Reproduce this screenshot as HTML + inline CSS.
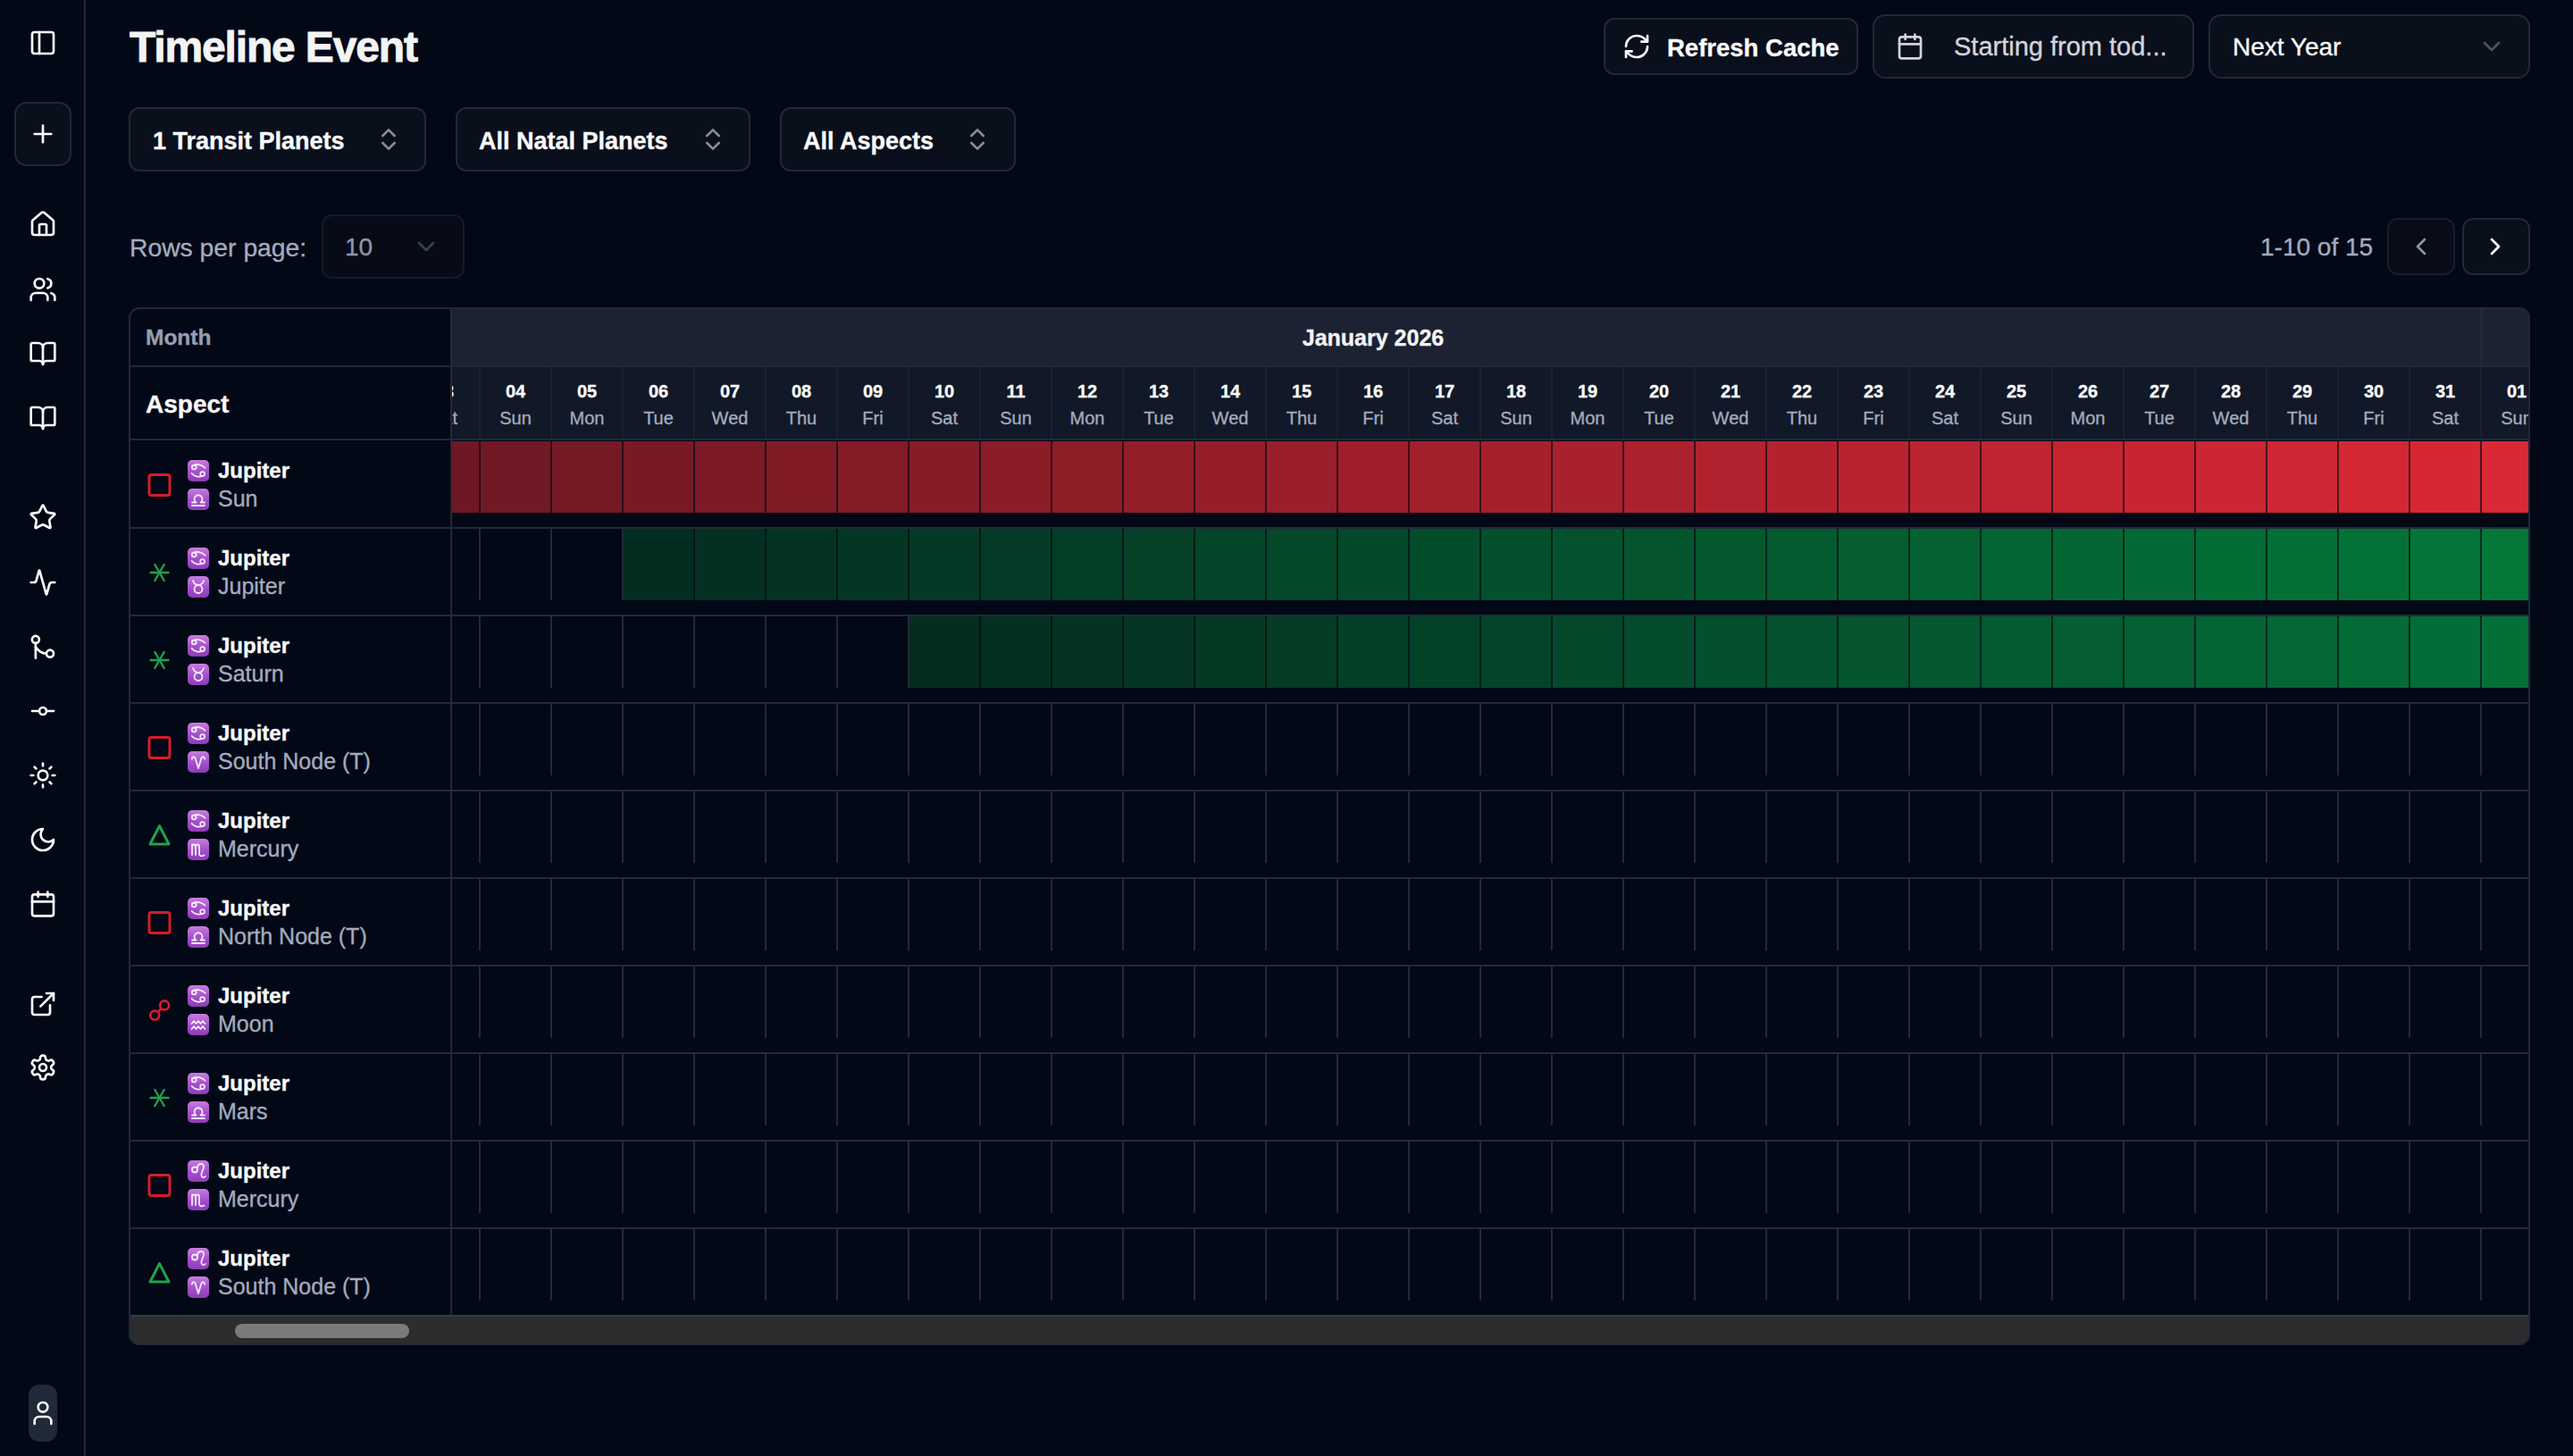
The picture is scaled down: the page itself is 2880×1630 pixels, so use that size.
<!DOCTYPE html>
<html><head><meta charset="utf-8"><title>Timeline Event</title>
<style>
html,body{margin:0;padding:0;}
body{width:2880px;height:1630px;overflow:hidden;background:#020816;font-family:"Liberation Sans",sans-serif;position:relative;}
svg{display:block;overflow:visible}
div{-webkit-text-stroke:0.35px}
@media (max-width:2000px){html{zoom:0.5}}
</style></head><body>
<div style="position:absolute;left:94px;top:0px;width:2px;height:1630px;box-sizing:border-box;background:#1f2937"></div><svg style="position:absolute;left:32px;top:32px" width="32" height="32" viewBox="0 0 24 24" fill="none" stroke="#f9fafb" stroke-width="2" stroke-linecap="round" stroke-linejoin="round" ><rect width="18" height="18" x="3" y="3" rx="2"/><path d="M9 3v18"/></svg><div style="position:absolute;left:16px;top:114px;width:64px;height:72px;box-sizing:border-box;border:2px solid #1f2937;border-radius:14px;background:#0a0f1c"></div><svg style="position:absolute;left:32px;top:134px" width="32" height="32" viewBox="0 0 24 24" fill="none" stroke="#f9fafb" stroke-width="2" stroke-linecap="round" stroke-linejoin="round" ><path d="M5 12h14"/><path d="M12 5v14"/></svg><svg style="position:absolute;left:32px;top:235px" width="32" height="32" viewBox="0 0 24 24" fill="none" stroke="#f9fafb" stroke-width="2" stroke-linecap="round" stroke-linejoin="round" ><path d="M15 21v-8a1 1 0 0 0-1-1h-4a1 1 0 0 0-1 1v8"/><path d="M3 10a2 2 0 0 1 .709-1.528l7-5.999a2 2 0 0 1 2.582 0l7 5.999A2 2 0 0 1 21 10v9a2 2 0 0 1-2 2H5a2 2 0 0 1-2-2z"/></svg><svg style="position:absolute;left:32px;top:308px" width="32" height="32" viewBox="0 0 24 24" fill="none" stroke="#f9fafb" stroke-width="2" stroke-linecap="round" stroke-linejoin="round" ><path d="M16 21v-2a4 4 0 0 0-4-4H6a4 4 0 0 0-4 4v2"/><circle cx="9" cy="7" r="4"/><path d="M22 21v-2a4 4 0 0 0-3-3.87"/><path d="M16 3.13a4 4 0 0 1 0 7.75"/></svg><svg style="position:absolute;left:32px;top:380px" width="32" height="32" viewBox="0 0 24 24" fill="none" stroke="#f9fafb" stroke-width="2" stroke-linecap="round" stroke-linejoin="round" ><path d="M12 7v14"/><path d="M3 18a1 1 0 0 1-1-1V4a1 1 0 0 1 1-1h5a4 4 0 0 1 4 4 4 4 0 0 1 4-4h5a1 1 0 0 1 1 1v13a1 1 0 0 1-1 1h-6a3 3 0 0 0-3 3 3 3 0 0 0-3-3z"/></svg><svg style="position:absolute;left:32px;top:452px" width="32" height="32" viewBox="0 0 24 24" fill="none" stroke="#f9fafb" stroke-width="2" stroke-linecap="round" stroke-linejoin="round" ><path d="M12 7v14"/><path d="M3 18a1 1 0 0 1-1-1V4a1 1 0 0 1 1-1h5a4 4 0 0 1 4 4 4 4 0 0 1 4-4h5a1 1 0 0 1 1 1v13a1 1 0 0 1-1 1h-6a3 3 0 0 0-3 3 3 3 0 0 0-3-3z"/></svg><svg style="position:absolute;left:32px;top:563px" width="32" height="32" viewBox="0 0 24 24" fill="none" stroke="#f9fafb" stroke-width="2" stroke-linecap="round" stroke-linejoin="round" ><path d="M11.525 2.295a.53.53 0 0 1 .95 0l2.31 4.679a2.123 2.123 0 0 0 1.595 1.16l5.166.756a.53.53 0 0 1 .294.904l-3.736 3.638a2.123 2.123 0 0 0-.611 1.878l.882 5.14a.53.53 0 0 1-.771.56l-4.618-2.428a2.122 2.122 0 0 0-1.973 0L6.396 21.01a.53.53 0 0 1-.77-.56l.881-5.139a2.122 2.122 0 0 0-.611-1.879L2.16 9.795a.53.53 0 0 1 .294-.906l5.165-.755a2.122 2.122 0 0 0 1.597-1.16z"/></svg><svg style="position:absolute;left:32px;top:636px" width="32" height="32" viewBox="0 0 24 24" fill="none" stroke="#f9fafb" stroke-width="2" stroke-linecap="round" stroke-linejoin="round" ><path d="M22 12h-2.48a2 2 0 0 0-1.93 1.46l-2.35 8.36a.25.25 0 0 1-.48 0L9.24 2.18a.25.25 0 0 0-.48 0l-2.35 8.36A2 2 0 0 1 4.49 12H2"/></svg><svg style="position:absolute;left:32px;top:709px" width="32" height="32" viewBox="0 0 24 24" fill="none" stroke="#f9fafb" stroke-width="2" stroke-linecap="round" stroke-linejoin="round" ><circle cx="5.9" cy="5.2" r="3"/><path d="M5.9 8.2v12.6"/><path d="M5.9 11.5c2 3 5 5.5 9 5.5"/><circle cx="18" cy="17" r="3"/></svg><svg style="position:absolute;left:32px;top:780px" width="32" height="32" viewBox="0 0 24 24" fill="none" stroke="#f9fafb" stroke-width="2" stroke-linecap="round" stroke-linejoin="round" ><circle cx="12" cy="12" r="3"/><line x1="3" x2="9" y1="12" y2="12"/><line x1="15" x2="21" y1="12" y2="12"/></svg><svg style="position:absolute;left:32px;top:852px" width="32" height="32" viewBox="0 0 24 24" fill="none" stroke="#f9fafb" stroke-width="2" stroke-linecap="round" stroke-linejoin="round" ><circle cx="12" cy="12" r="4"/><path d="M12 2v2"/><path d="M12 20v2"/><path d="m4.93 4.93 1.41 1.41"/><path d="m17.66 17.66 1.41 1.41"/><path d="M2 12h2"/><path d="M20 12h2"/><path d="m6.34 17.66-1.41 1.41"/><path d="m19.07 4.93-1.41 1.41"/></svg><svg style="position:absolute;left:32px;top:924px" width="32" height="32" viewBox="0 0 24 24" fill="none" stroke="#f9fafb" stroke-width="2" stroke-linecap="round" stroke-linejoin="round" ><path d="M12 3a6 6 0 0 0 9 9 9 9 0 1 1-9-9Z"/></svg><svg style="position:absolute;left:32px;top:996px" width="32" height="32" viewBox="0 0 24 24" fill="none" stroke="#f9fafb" stroke-width="2" stroke-linecap="round" stroke-linejoin="round" ><path d="M8 2v4"/><path d="M16 2v4"/><rect width="18" height="18" x="3" y="4" rx="2"/><path d="M3 10h18"/></svg><svg style="position:absolute;left:32px;top:1108px" width="32" height="32" viewBox="0 0 24 24" fill="none" stroke="#f9fafb" stroke-width="2" stroke-linecap="round" stroke-linejoin="round" ><path d="M15 3h6v6"/><path d="M10 14 21 3"/><path d="M18 13v6a2 2 0 0 1-2 2H5a2 2 0 0 1-2-2V8a2 2 0 0 1 2-2h6"/></svg><svg style="position:absolute;left:32px;top:1179px" width="32" height="32" viewBox="0 0 24 24" fill="none" stroke="#f9fafb" stroke-width="2" stroke-linecap="round" stroke-linejoin="round" ><path d="M12.22 2h-.44a2 2 0 0 0-2 2v.18a2 2 0 0 1-1 1.73l-.43.25a2 2 0 0 1-2 0l-.15-.08a2 2 0 0 0-2.73.73l-.22.38a2 2 0 0 0 .73 2.73l.15.1a2 2 0 0 1 1 1.72v.51a2 2 0 0 1-1 1.74l-.15.09a2 2 0 0 0-.73 2.73l.22.38a2 2 0 0 0 2.73.73l.15-.08a2 2 0 0 1 2 0l.43.25a2 2 0 0 1 1 1.73V20a2 2 0 0 0 2 2h.44a2 2 0 0 0 2-2v-.18a2 2 0 0 1 1-1.73l.43-.25a2 2 0 0 1 2 0l.15.08a2 2 0 0 0 2.73-.73l.22-.39a2 2 0 0 0-.73-2.73l-.15-.08a2 2 0 0 1-1-1.74v-.5a2 2 0 0 1 1-1.74l.15-.09a2 2 0 0 0 .73-2.73l-.22-.38a2 2 0 0 0-2.73-.73l-.15.08a2 2 0 0 1-2 0l-.43-.25a2 2 0 0 1-1-1.73V4a2 2 0 0 0-2-2z"/><circle cx="12" cy="12" r="3"/></svg><div style="position:absolute;left:32px;top:1550px;width:32px;height:64px;box-sizing:border-box;background:#1f2937;border-radius:12px"></div><svg style="position:absolute;left:32px;top:1566px" width="32" height="32" viewBox="0 0 24 24" fill="none" stroke="#f9fafb" stroke-width="2" stroke-linecap="round" stroke-linejoin="round" ><path d="M19 21v-2a4 4 0 0 0-4-4H9a4 4 0 0 0-4 4v2"/><circle cx="12" cy="7" r="4"/></svg><div style="position:absolute;left:145px;top:29.37px;font-size:48px;line-height:48px;color:#f3f4f6;font-weight:700;white-space:nowrap;letter-spacing:-1.15px;-webkit-text-stroke:0.9px #f3f4f6">Timeline Event</div><div style="position:absolute;left:1795px;top:20px;width:285px;height:64px;box-sizing:border-box;border:2px solid #1f2937;border-radius:12px;background:#0a0f1c"></div><svg style="position:absolute;left:1816px;top:36px" width="32" height="32" viewBox="0 0 24 24" fill="none" stroke="#f9fafb" stroke-width="2" stroke-linecap="round" stroke-linejoin="round" ><path d="M3 12a9 9 0 0 1 9-9 9.75 9.75 0 0 1 6.74 2.74L21 8"/><path d="M21 3v5h-5"/><path d="M21 12a9 9 0 0 1-9 9 9.75 9.75 0 0 1-6.74-2.74L3 16"/><path d="M8 16H3v5"/></svg><div style="position:absolute;left:1866px;top:39.72px;font-size:27.5px;line-height:27.5px;color:#f9fafb;font-weight:700;white-space:nowrap;">Refresh Cache</div><div style="position:absolute;left:2096px;top:16px;width:360px;height:72px;box-sizing:border-box;border:2px solid #1f2937;border-radius:14px;background:#0a0f1c"></div><svg style="position:absolute;left:2122px;top:36px" width="32" height="32" viewBox="0 0 24 24" fill="none" stroke="#d1d5db" stroke-width="2" stroke-linecap="round" stroke-linejoin="round" ><path d="M8 2v4"/><path d="M16 2v4"/><rect width="18" height="18" x="3" y="4" rx="2"/><path d="M3 10h18"/></svg><div style="position:absolute;left:2187px;top:38.45px;font-size:29px;line-height:29px;color:#d1d5db;font-weight:400;white-space:nowrap;">Starting from tod...</div><div style="position:absolute;left:2472px;top:16px;width:360px;height:72px;box-sizing:border-box;border:2px solid #1f2937;border-radius:14px;background:#0a0f1c"></div><div style="position:absolute;left:2499px;top:39.30px;font-size:28px;line-height:28px;color:#f9fafb;font-weight:400;white-space:nowrap;">Next Year</div><svg style="position:absolute;left:2773px;top:36px" width="32" height="32" viewBox="0 0 24 24" fill="none" stroke="#9ca3af" stroke-width="2" stroke-linecap="round" stroke-linejoin="round" opacity="0.45"><path d="m6 9 6 6 6-6"/></svg><div style="position:absolute;left:144px;top:120px;width:333px;height:72px;box-sizing:border-box;border:2px solid #1f2937;border-radius:12px;background:#0a0f1c"></div><div style="position:absolute;left:171px;top:145.14px;font-size:27px;line-height:27px;color:#f9fafb;font-weight:700;white-space:nowrap;">1 Transit Planets</div><svg style="position:absolute;left:419px;top:140px" width="32" height="32" viewBox="0 0 24 24" fill="none" stroke="#9ca3af" stroke-width="2" stroke-linecap="round" stroke-linejoin="round" opacity="0.85"><path d="m7 15 5 5 5-5"/><path d="m7 9 5-5 5 5"/></svg><div style="position:absolute;left:510px;top:120px;width:330px;height:72px;box-sizing:border-box;border:2px solid #1f2937;border-radius:12px;background:#0a0f1c"></div><div style="position:absolute;left:536px;top:145.14px;font-size:27px;line-height:27px;color:#f9fafb;font-weight:700;white-space:nowrap;">All Natal Planets</div><svg style="position:absolute;left:782px;top:140px" width="32" height="32" viewBox="0 0 24 24" fill="none" stroke="#9ca3af" stroke-width="2" stroke-linecap="round" stroke-linejoin="round" opacity="0.85"><path d="m7 15 5 5 5-5"/><path d="m7 9 5-5 5 5"/></svg><div style="position:absolute;left:873px;top:120px;width:264px;height:72px;box-sizing:border-box;border:2px solid #1f2937;border-radius:12px;background:#0a0f1c"></div><div style="position:absolute;left:899px;top:145.14px;font-size:27px;line-height:27px;color:#f9fafb;font-weight:700;white-space:nowrap;">All Aspects</div><svg style="position:absolute;left:1078px;top:140px" width="32" height="32" viewBox="0 0 24 24" fill="none" stroke="#9ca3af" stroke-width="2" stroke-linecap="round" stroke-linejoin="round" opacity="0.85"><path d="m7 15 5 5 5-5"/><path d="m7 9 5-5 5 5"/></svg><div style="position:absolute;left:145px;top:263.04px;font-size:28.3px;line-height:28.3px;color:#a3abbd;font-weight:400;white-space:nowrap;">Rows per page:</div><div style="position:absolute;left:360px;top:240px;width:160px;height:72px;box-sizing:border-box;border:2px solid #141a27;border-radius:12px;background:#060b17"></div><div style="position:absolute;left:386px;top:263.30px;font-size:28px;line-height:28px;color:#9097a4;font-weight:400;white-space:nowrap;">10</div><svg style="position:absolute;left:461px;top:260px" width="32" height="32" viewBox="0 0 24 24" fill="none" stroke="#9ca3af" stroke-width="2" stroke-linecap="round" stroke-linejoin="round" opacity="0.35"><path d="m6 9 6 6 6-6"/></svg><div style="position:absolute;left:2530px;top:263.30px;font-size:28px;line-height:28px;color:#a3abbd;font-weight:400;white-space:nowrap;">1-10 of 15</div><div style="position:absolute;left:2672px;top:244px;width:76px;height:64px;box-sizing:border-box;border:2px solid #171d2a;border-radius:12px;background:#070c18"></div><svg style="position:absolute;left:2694px;top:260px" width="32" height="32" viewBox="0 0 24 24" fill="none" stroke="#8d94a2" stroke-width="2" stroke-linecap="round" stroke-linejoin="round" ><path d="m15 18-6-6 6-6"/></svg><div style="position:absolute;left:2756px;top:244px;width:76px;height:64px;box-sizing:border-box;border:2px solid #1f2937;border-radius:12px;background:#0a0f1c"></div><svg style="position:absolute;left:2777px;top:260px" width="32" height="32" viewBox="0 0 24 24" fill="none" stroke="#f9fafb" stroke-width="2" stroke-linecap="round" stroke-linejoin="round" ><path d="m9 18 6-6-6-6"/></svg><div style="position:absolute;left:145px;top:344px;width:2686px;height:1162px;overflow:hidden;border-radius:12px"><div style="position:absolute;left:360px;top:0px;width:2326px;height:67px;box-sizing:border-box;background:#1c2232"></div><div style="position:absolute;left:360px;top:65px;width:2326px;height:2px;box-sizing:border-box;background:#1f2937"></div><div style="position:absolute;left:2631px;top:0px;width:2px;height:65px;box-sizing:border-box;background:#222a39"></div><div style="position:absolute;left:1092px;width:600px;text-align:center;top:21.84px;font-size:25px;line-height:25px;color:#f3f4f6;font-weight:700;white-space:nowrap;">January 2026</div><div style="position:absolute;left:360px;top:67px;width:2326px;height:82px;box-sizing:border-box;background:#111827"></div><div style="position:absolute;left:0px;top:147px;width:2686px;height:2px;box-sizing:border-box;background:#1f2937"></div><div style="position:absolute;left:391px;top:67px;width:2px;height:80px;box-sizing:border-box;background:#1a2130"></div><div style="position:absolute;left:52px;width:600px;text-align:center;top:83.57px;font-size:20px;line-height:20px;color:#f9fafb;font-weight:700;white-space:nowrap;">03</div><div style="position:absolute;left:52px;width:600px;text-align:center;top:113.67px;font-size:20px;line-height:20px;color:#a3abbd;font-weight:400;white-space:nowrap;">Sat</div><div style="position:absolute;left:471px;top:67px;width:2px;height:80px;box-sizing:border-box;background:#1a2130"></div><div style="position:absolute;left:132px;width:600px;text-align:center;top:83.57px;font-size:20px;line-height:20px;color:#f9fafb;font-weight:700;white-space:nowrap;">04</div><div style="position:absolute;left:132px;width:600px;text-align:center;top:113.67px;font-size:20px;line-height:20px;color:#a3abbd;font-weight:400;white-space:nowrap;">Sun</div><div style="position:absolute;left:551px;top:67px;width:2px;height:80px;box-sizing:border-box;background:#1a2130"></div><div style="position:absolute;left:212px;width:600px;text-align:center;top:83.57px;font-size:20px;line-height:20px;color:#f9fafb;font-weight:700;white-space:nowrap;">05</div><div style="position:absolute;left:212px;width:600px;text-align:center;top:113.67px;font-size:20px;line-height:20px;color:#a3abbd;font-weight:400;white-space:nowrap;">Mon</div><div style="position:absolute;left:631px;top:67px;width:2px;height:80px;box-sizing:border-box;background:#1a2130"></div><div style="position:absolute;left:292px;width:600px;text-align:center;top:83.57px;font-size:20px;line-height:20px;color:#f9fafb;font-weight:700;white-space:nowrap;">06</div><div style="position:absolute;left:292px;width:600px;text-align:center;top:113.67px;font-size:20px;line-height:20px;color:#a3abbd;font-weight:400;white-space:nowrap;">Tue</div><div style="position:absolute;left:711px;top:67px;width:2px;height:80px;box-sizing:border-box;background:#1a2130"></div><div style="position:absolute;left:372px;width:600px;text-align:center;top:83.57px;font-size:20px;line-height:20px;color:#f9fafb;font-weight:700;white-space:nowrap;">07</div><div style="position:absolute;left:372px;width:600px;text-align:center;top:113.67px;font-size:20px;line-height:20px;color:#a3abbd;font-weight:400;white-space:nowrap;">Wed</div><div style="position:absolute;left:791px;top:67px;width:2px;height:80px;box-sizing:border-box;background:#1a2130"></div><div style="position:absolute;left:452px;width:600px;text-align:center;top:83.57px;font-size:20px;line-height:20px;color:#f9fafb;font-weight:700;white-space:nowrap;">08</div><div style="position:absolute;left:452px;width:600px;text-align:center;top:113.67px;font-size:20px;line-height:20px;color:#a3abbd;font-weight:400;white-space:nowrap;">Thu</div><div style="position:absolute;left:871px;top:67px;width:2px;height:80px;box-sizing:border-box;background:#1a2130"></div><div style="position:absolute;left:532px;width:600px;text-align:center;top:83.57px;font-size:20px;line-height:20px;color:#f9fafb;font-weight:700;white-space:nowrap;">09</div><div style="position:absolute;left:532px;width:600px;text-align:center;top:113.67px;font-size:20px;line-height:20px;color:#a3abbd;font-weight:400;white-space:nowrap;">Fri</div><div style="position:absolute;left:951px;top:67px;width:2px;height:80px;box-sizing:border-box;background:#1a2130"></div><div style="position:absolute;left:612px;width:600px;text-align:center;top:83.57px;font-size:20px;line-height:20px;color:#f9fafb;font-weight:700;white-space:nowrap;">10</div><div style="position:absolute;left:612px;width:600px;text-align:center;top:113.67px;font-size:20px;line-height:20px;color:#a3abbd;font-weight:400;white-space:nowrap;">Sat</div><div style="position:absolute;left:1031px;top:67px;width:2px;height:80px;box-sizing:border-box;background:#1a2130"></div><div style="position:absolute;left:692px;width:600px;text-align:center;top:83.57px;font-size:20px;line-height:20px;color:#f9fafb;font-weight:700;white-space:nowrap;">11</div><div style="position:absolute;left:692px;width:600px;text-align:center;top:113.67px;font-size:20px;line-height:20px;color:#a3abbd;font-weight:400;white-space:nowrap;">Sun</div><div style="position:absolute;left:1111px;top:67px;width:2px;height:80px;box-sizing:border-box;background:#1a2130"></div><div style="position:absolute;left:772px;width:600px;text-align:center;top:83.57px;font-size:20px;line-height:20px;color:#f9fafb;font-weight:700;white-space:nowrap;">12</div><div style="position:absolute;left:772px;width:600px;text-align:center;top:113.67px;font-size:20px;line-height:20px;color:#a3abbd;font-weight:400;white-space:nowrap;">Mon</div><div style="position:absolute;left:1191px;top:67px;width:2px;height:80px;box-sizing:border-box;background:#1a2130"></div><div style="position:absolute;left:852px;width:600px;text-align:center;top:83.57px;font-size:20px;line-height:20px;color:#f9fafb;font-weight:700;white-space:nowrap;">13</div><div style="position:absolute;left:852px;width:600px;text-align:center;top:113.67px;font-size:20px;line-height:20px;color:#a3abbd;font-weight:400;white-space:nowrap;">Tue</div><div style="position:absolute;left:1271px;top:67px;width:2px;height:80px;box-sizing:border-box;background:#1a2130"></div><div style="position:absolute;left:932px;width:600px;text-align:center;top:83.57px;font-size:20px;line-height:20px;color:#f9fafb;font-weight:700;white-space:nowrap;">14</div><div style="position:absolute;left:932px;width:600px;text-align:center;top:113.67px;font-size:20px;line-height:20px;color:#a3abbd;font-weight:400;white-space:nowrap;">Wed</div><div style="position:absolute;left:1351px;top:67px;width:2px;height:80px;box-sizing:border-box;background:#1a2130"></div><div style="position:absolute;left:1012px;width:600px;text-align:center;top:83.57px;font-size:20px;line-height:20px;color:#f9fafb;font-weight:700;white-space:nowrap;">15</div><div style="position:absolute;left:1012px;width:600px;text-align:center;top:113.67px;font-size:20px;line-height:20px;color:#a3abbd;font-weight:400;white-space:nowrap;">Thu</div><div style="position:absolute;left:1431px;top:67px;width:2px;height:80px;box-sizing:border-box;background:#1a2130"></div><div style="position:absolute;left:1092px;width:600px;text-align:center;top:83.57px;font-size:20px;line-height:20px;color:#f9fafb;font-weight:700;white-space:nowrap;">16</div><div style="position:absolute;left:1092px;width:600px;text-align:center;top:113.67px;font-size:20px;line-height:20px;color:#a3abbd;font-weight:400;white-space:nowrap;">Fri</div><div style="position:absolute;left:1511px;top:67px;width:2px;height:80px;box-sizing:border-box;background:#1a2130"></div><div style="position:absolute;left:1172px;width:600px;text-align:center;top:83.57px;font-size:20px;line-height:20px;color:#f9fafb;font-weight:700;white-space:nowrap;">17</div><div style="position:absolute;left:1172px;width:600px;text-align:center;top:113.67px;font-size:20px;line-height:20px;color:#a3abbd;font-weight:400;white-space:nowrap;">Sat</div><div style="position:absolute;left:1591px;top:67px;width:2px;height:80px;box-sizing:border-box;background:#1a2130"></div><div style="position:absolute;left:1252px;width:600px;text-align:center;top:83.57px;font-size:20px;line-height:20px;color:#f9fafb;font-weight:700;white-space:nowrap;">18</div><div style="position:absolute;left:1252px;width:600px;text-align:center;top:113.67px;font-size:20px;line-height:20px;color:#a3abbd;font-weight:400;white-space:nowrap;">Sun</div><div style="position:absolute;left:1671px;top:67px;width:2px;height:80px;box-sizing:border-box;background:#1a2130"></div><div style="position:absolute;left:1332px;width:600px;text-align:center;top:83.57px;font-size:20px;line-height:20px;color:#f9fafb;font-weight:700;white-space:nowrap;">19</div><div style="position:absolute;left:1332px;width:600px;text-align:center;top:113.67px;font-size:20px;line-height:20px;color:#a3abbd;font-weight:400;white-space:nowrap;">Mon</div><div style="position:absolute;left:1751px;top:67px;width:2px;height:80px;box-sizing:border-box;background:#1a2130"></div><div style="position:absolute;left:1412px;width:600px;text-align:center;top:83.57px;font-size:20px;line-height:20px;color:#f9fafb;font-weight:700;white-space:nowrap;">20</div><div style="position:absolute;left:1412px;width:600px;text-align:center;top:113.67px;font-size:20px;line-height:20px;color:#a3abbd;font-weight:400;white-space:nowrap;">Tue</div><div style="position:absolute;left:1831px;top:67px;width:2px;height:80px;box-sizing:border-box;background:#1a2130"></div><div style="position:absolute;left:1492px;width:600px;text-align:center;top:83.57px;font-size:20px;line-height:20px;color:#f9fafb;font-weight:700;white-space:nowrap;">21</div><div style="position:absolute;left:1492px;width:600px;text-align:center;top:113.67px;font-size:20px;line-height:20px;color:#a3abbd;font-weight:400;white-space:nowrap;">Wed</div><div style="position:absolute;left:1911px;top:67px;width:2px;height:80px;box-sizing:border-box;background:#1a2130"></div><div style="position:absolute;left:1572px;width:600px;text-align:center;top:83.57px;font-size:20px;line-height:20px;color:#f9fafb;font-weight:700;white-space:nowrap;">22</div><div style="position:absolute;left:1572px;width:600px;text-align:center;top:113.67px;font-size:20px;line-height:20px;color:#a3abbd;font-weight:400;white-space:nowrap;">Thu</div><div style="position:absolute;left:1991px;top:67px;width:2px;height:80px;box-sizing:border-box;background:#1a2130"></div><div style="position:absolute;left:1652px;width:600px;text-align:center;top:83.57px;font-size:20px;line-height:20px;color:#f9fafb;font-weight:700;white-space:nowrap;">23</div><div style="position:absolute;left:1652px;width:600px;text-align:center;top:113.67px;font-size:20px;line-height:20px;color:#a3abbd;font-weight:400;white-space:nowrap;">Fri</div><div style="position:absolute;left:2071px;top:67px;width:2px;height:80px;box-sizing:border-box;background:#1a2130"></div><div style="position:absolute;left:1732px;width:600px;text-align:center;top:83.57px;font-size:20px;line-height:20px;color:#f9fafb;font-weight:700;white-space:nowrap;">24</div><div style="position:absolute;left:1732px;width:600px;text-align:center;top:113.67px;font-size:20px;line-height:20px;color:#a3abbd;font-weight:400;white-space:nowrap;">Sat</div><div style="position:absolute;left:2151px;top:67px;width:2px;height:80px;box-sizing:border-box;background:#1a2130"></div><div style="position:absolute;left:1812px;width:600px;text-align:center;top:83.57px;font-size:20px;line-height:20px;color:#f9fafb;font-weight:700;white-space:nowrap;">25</div><div style="position:absolute;left:1812px;width:600px;text-align:center;top:113.67px;font-size:20px;line-height:20px;color:#a3abbd;font-weight:400;white-space:nowrap;">Sun</div><div style="position:absolute;left:2231px;top:67px;width:2px;height:80px;box-sizing:border-box;background:#1a2130"></div><div style="position:absolute;left:1892px;width:600px;text-align:center;top:83.57px;font-size:20px;line-height:20px;color:#f9fafb;font-weight:700;white-space:nowrap;">26</div><div style="position:absolute;left:1892px;width:600px;text-align:center;top:113.67px;font-size:20px;line-height:20px;color:#a3abbd;font-weight:400;white-space:nowrap;">Mon</div><div style="position:absolute;left:2311px;top:67px;width:2px;height:80px;box-sizing:border-box;background:#1a2130"></div><div style="position:absolute;left:1972px;width:600px;text-align:center;top:83.57px;font-size:20px;line-height:20px;color:#f9fafb;font-weight:700;white-space:nowrap;">27</div><div style="position:absolute;left:1972px;width:600px;text-align:center;top:113.67px;font-size:20px;line-height:20px;color:#a3abbd;font-weight:400;white-space:nowrap;">Tue</div><div style="position:absolute;left:2391px;top:67px;width:2px;height:80px;box-sizing:border-box;background:#1a2130"></div><div style="position:absolute;left:2052px;width:600px;text-align:center;top:83.57px;font-size:20px;line-height:20px;color:#f9fafb;font-weight:700;white-space:nowrap;">28</div><div style="position:absolute;left:2052px;width:600px;text-align:center;top:113.67px;font-size:20px;line-height:20px;color:#a3abbd;font-weight:400;white-space:nowrap;">Wed</div><div style="position:absolute;left:2471px;top:67px;width:2px;height:80px;box-sizing:border-box;background:#1a2130"></div><div style="position:absolute;left:2132px;width:600px;text-align:center;top:83.57px;font-size:20px;line-height:20px;color:#f9fafb;font-weight:700;white-space:nowrap;">29</div><div style="position:absolute;left:2132px;width:600px;text-align:center;top:113.67px;font-size:20px;line-height:20px;color:#a3abbd;font-weight:400;white-space:nowrap;">Thu</div><div style="position:absolute;left:2551px;top:67px;width:2px;height:80px;box-sizing:border-box;background:#1a2130"></div><div style="position:absolute;left:2212px;width:600px;text-align:center;top:83.57px;font-size:20px;line-height:20px;color:#f9fafb;font-weight:700;white-space:nowrap;">30</div><div style="position:absolute;left:2212px;width:600px;text-align:center;top:113.67px;font-size:20px;line-height:20px;color:#a3abbd;font-weight:400;white-space:nowrap;">Fri</div><div style="position:absolute;left:2631px;top:67px;width:2px;height:80px;box-sizing:border-box;background:#1a2130"></div><div style="position:absolute;left:2292px;width:600px;text-align:center;top:83.57px;font-size:20px;line-height:20px;color:#f9fafb;font-weight:700;white-space:nowrap;">31</div><div style="position:absolute;left:2292px;width:600px;text-align:center;top:113.67px;font-size:20px;line-height:20px;color:#a3abbd;font-weight:400;white-space:nowrap;">Sat</div><div style="position:absolute;left:2711px;top:67px;width:2px;height:80px;box-sizing:border-box;background:#1a2130"></div><div style="position:absolute;left:2372px;width:600px;text-align:center;top:83.57px;font-size:20px;line-height:20px;color:#f9fafb;font-weight:700;white-space:nowrap;">01</div><div style="position:absolute;left:2372px;width:600px;text-align:center;top:113.67px;font-size:20px;line-height:20px;color:#a3abbd;font-weight:400;white-space:nowrap;">Sun</div><div style="position:absolute;left:2791px;top:67px;width:2px;height:80px;box-sizing:border-box;background:#1a2130"></div><div style="position:absolute;left:2452px;width:600px;text-align:center;top:83.57px;font-size:20px;line-height:20px;color:#f9fafb;font-weight:700;white-space:nowrap;">02</div><div style="position:absolute;left:2452px;width:600px;text-align:center;top:113.67px;font-size:20px;line-height:20px;color:#a3abbd;font-weight:400;white-space:nowrap;">Mon</div><div style="position:absolute;left:313px;top:150px;width:80px;height:80px;box-sizing:border-box;background:#6d1823"></div><div style="position:absolute;left:391px;top:150px;width:2px;height:80px;box-sizing:border-box;background:rgba(2,8,22,.65)"></div><div style="position:absolute;left:393px;top:150px;width:80px;height:80px;box-sizing:border-box;background:#711924"></div><div style="position:absolute;left:471px;top:150px;width:2px;height:80px;box-sizing:border-box;background:rgba(2,8,22,.65)"></div><div style="position:absolute;left:473px;top:150px;width:80px;height:80px;box-sizing:border-box;background:#751924"></div><div style="position:absolute;left:551px;top:150px;width:2px;height:80px;box-sizing:border-box;background:rgba(2,8,22,.65)"></div><div style="position:absolute;left:553px;top:150px;width:80px;height:80px;box-sizing:border-box;background:#781a25"></div><div style="position:absolute;left:631px;top:150px;width:2px;height:80px;box-sizing:border-box;background:rgba(2,8,22,.65)"></div><div style="position:absolute;left:633px;top:150px;width:80px;height:80px;box-sizing:border-box;background:#7c1a25"></div><div style="position:absolute;left:711px;top:150px;width:2px;height:80px;box-sizing:border-box;background:rgba(2,8,22,.65)"></div><div style="position:absolute;left:713px;top:150px;width:80px;height:80px;box-sizing:border-box;background:#801b26"></div><div style="position:absolute;left:791px;top:150px;width:2px;height:80px;box-sizing:border-box;background:rgba(2,8,22,.65)"></div><div style="position:absolute;left:793px;top:150px;width:80px;height:80px;box-sizing:border-box;background:#841b27"></div><div style="position:absolute;left:871px;top:150px;width:2px;height:80px;box-sizing:border-box;background:rgba(2,8,22,.65)"></div><div style="position:absolute;left:873px;top:150px;width:80px;height:80px;box-sizing:border-box;background:#871c27"></div><div style="position:absolute;left:951px;top:150px;width:2px;height:80px;box-sizing:border-box;background:rgba(2,8,22,.65)"></div><div style="position:absolute;left:953px;top:150px;width:80px;height:80px;box-sizing:border-box;background:#8b1c28"></div><div style="position:absolute;left:1031px;top:150px;width:2px;height:80px;box-sizing:border-box;background:rgba(2,8,22,.65)"></div><div style="position:absolute;left:1033px;top:150px;width:80px;height:80px;box-sizing:border-box;background:#8f1d28"></div><div style="position:absolute;left:1111px;top:150px;width:2px;height:80px;box-sizing:border-box;background:rgba(2,8,22,.65)"></div><div style="position:absolute;left:1113px;top:150px;width:80px;height:80px;box-sizing:border-box;background:#931e29"></div><div style="position:absolute;left:1191px;top:150px;width:2px;height:80px;box-sizing:border-box;background:rgba(2,8,22,.65)"></div><div style="position:absolute;left:1193px;top:150px;width:80px;height:80px;box-sizing:border-box;background:#961e2a"></div><div style="position:absolute;left:1271px;top:150px;width:2px;height:80px;box-sizing:border-box;background:rgba(2,8,22,.65)"></div><div style="position:absolute;left:1273px;top:150px;width:80px;height:80px;box-sizing:border-box;background:#9a1f2a"></div><div style="position:absolute;left:1351px;top:150px;width:2px;height:80px;box-sizing:border-box;background:rgba(2,8,22,.65)"></div><div style="position:absolute;left:1353px;top:150px;width:80px;height:80px;box-sizing:border-box;background:#9e1f2b"></div><div style="position:absolute;left:1431px;top:150px;width:2px;height:80px;box-sizing:border-box;background:rgba(2,8,22,.65)"></div><div style="position:absolute;left:1433px;top:150px;width:80px;height:80px;box-sizing:border-box;background:#a2202b"></div><div style="position:absolute;left:1511px;top:150px;width:2px;height:80px;box-sizing:border-box;background:rgba(2,8,22,.65)"></div><div style="position:absolute;left:1513px;top:150px;width:80px;height:80px;box-sizing:border-box;background:#a6202c"></div><div style="position:absolute;left:1591px;top:150px;width:2px;height:80px;box-sizing:border-box;background:rgba(2,8,22,.65)"></div><div style="position:absolute;left:1593px;top:150px;width:80px;height:80px;box-sizing:border-box;background:#a9212d"></div><div style="position:absolute;left:1671px;top:150px;width:2px;height:80px;box-sizing:border-box;background:rgba(2,8,22,.65)"></div><div style="position:absolute;left:1673px;top:150px;width:80px;height:80px;box-sizing:border-box;background:#ad212d"></div><div style="position:absolute;left:1751px;top:150px;width:2px;height:80px;box-sizing:border-box;background:rgba(2,8,22,.65)"></div><div style="position:absolute;left:1753px;top:150px;width:80px;height:80px;box-sizing:border-box;background:#b1222e"></div><div style="position:absolute;left:1831px;top:150px;width:2px;height:80px;box-sizing:border-box;background:rgba(2,8,22,.65)"></div><div style="position:absolute;left:1833px;top:150px;width:80px;height:80px;box-sizing:border-box;background:#b5222e"></div><div style="position:absolute;left:1911px;top:150px;width:2px;height:80px;box-sizing:border-box;background:rgba(2,8,22,.65)"></div><div style="position:absolute;left:1913px;top:150px;width:80px;height:80px;box-sizing:border-box;background:#b8232f"></div><div style="position:absolute;left:1991px;top:150px;width:2px;height:80px;box-sizing:border-box;background:rgba(2,8,22,.65)"></div><div style="position:absolute;left:1993px;top:150px;width:80px;height:80px;box-sizing:border-box;background:#bc2430"></div><div style="position:absolute;left:2071px;top:150px;width:2px;height:80px;box-sizing:border-box;background:rgba(2,8,22,.65)"></div><div style="position:absolute;left:2073px;top:150px;width:80px;height:80px;box-sizing:border-box;background:#c02430"></div><div style="position:absolute;left:2151px;top:150px;width:2px;height:80px;box-sizing:border-box;background:rgba(2,8,22,.65)"></div><div style="position:absolute;left:2153px;top:150px;width:80px;height:80px;box-sizing:border-box;background:#c42531"></div><div style="position:absolute;left:2231px;top:150px;width:2px;height:80px;box-sizing:border-box;background:rgba(2,8,22,.65)"></div><div style="position:absolute;left:2233px;top:150px;width:80px;height:80px;box-sizing:border-box;background:#c72531"></div><div style="position:absolute;left:2311px;top:150px;width:2px;height:80px;box-sizing:border-box;background:rgba(2,8,22,.65)"></div><div style="position:absolute;left:2313px;top:150px;width:80px;height:80px;box-sizing:border-box;background:#cb2632"></div><div style="position:absolute;left:2391px;top:150px;width:2px;height:80px;box-sizing:border-box;background:rgba(2,8,22,.65)"></div><div style="position:absolute;left:2393px;top:150px;width:80px;height:80px;box-sizing:border-box;background:#cf2633"></div><div style="position:absolute;left:2471px;top:150px;width:2px;height:80px;box-sizing:border-box;background:rgba(2,8,22,.65)"></div><div style="position:absolute;left:2473px;top:150px;width:80px;height:80px;box-sizing:border-box;background:#d32733"></div><div style="position:absolute;left:2551px;top:150px;width:2px;height:80px;box-sizing:border-box;background:rgba(2,8,22,.65)"></div><div style="position:absolute;left:2553px;top:150px;width:80px;height:80px;box-sizing:border-box;background:#d72734"></div><div style="position:absolute;left:2631px;top:150px;width:2px;height:80px;box-sizing:border-box;background:rgba(2,8,22,.65)"></div><div style="position:absolute;left:2633px;top:150px;width:80px;height:80px;box-sizing:border-box;background:#da2834"></div><div style="position:absolute;left:2711px;top:150px;width:2px;height:80px;box-sizing:border-box;background:rgba(2,8,22,.65)"></div><div style="position:absolute;left:2713px;top:150px;width:80px;height:80px;box-sizing:border-box;background:#de2835"></div><div style="position:absolute;left:2791px;top:150px;width:2px;height:80px;box-sizing:border-box;background:rgba(2,8,22,.65)"></div><div style="position:absolute;left:0px;top:246px;width:2686px;height:2px;box-sizing:border-box;background:#222a36"></div><div style="position:absolute;left:391px;top:248px;width:2px;height:80px;box-sizing:border-box;background:#222a36"></div><div style="position:absolute;left:471px;top:248px;width:2px;height:80px;box-sizing:border-box;background:#222a36"></div><div style="position:absolute;left:551px;top:248px;width:2px;height:80px;box-sizing:border-box;background:#222a36"></div><div style="position:absolute;left:553px;top:248px;width:80px;height:80px;box-sizing:border-box;background:#042d21"></div><div style="position:absolute;left:631px;top:248px;width:2px;height:80px;box-sizing:border-box;background:rgba(2,8,22,.65)"></div><div style="position:absolute;left:633px;top:248px;width:80px;height:80px;box-sizing:border-box;background:#043022"></div><div style="position:absolute;left:711px;top:248px;width:2px;height:80px;box-sizing:border-box;background:rgba(2,8,22,.65)"></div><div style="position:absolute;left:713px;top:248px;width:80px;height:80px;box-sizing:border-box;background:#043323"></div><div style="position:absolute;left:791px;top:248px;width:2px;height:80px;box-sizing:border-box;background:rgba(2,8,22,.65)"></div><div style="position:absolute;left:793px;top:248px;width:80px;height:80px;box-sizing:border-box;background:#043624"></div><div style="position:absolute;left:871px;top:248px;width:2px;height:80px;box-sizing:border-box;background:rgba(2,8,22,.65)"></div><div style="position:absolute;left:873px;top:248px;width:80px;height:80px;box-sizing:border-box;background:#043925"></div><div style="position:absolute;left:951px;top:248px;width:2px;height:80px;box-sizing:border-box;background:rgba(2,8,22,.65)"></div><div style="position:absolute;left:953px;top:248px;width:80px;height:80px;box-sizing:border-box;background:#043b26"></div><div style="position:absolute;left:1031px;top:248px;width:2px;height:80px;box-sizing:border-box;background:rgba(2,8,22,.65)"></div><div style="position:absolute;left:1033px;top:248px;width:80px;height:80px;box-sizing:border-box;background:#043e26"></div><div style="position:absolute;left:1111px;top:248px;width:2px;height:80px;box-sizing:border-box;background:rgba(2,8,22,.65)"></div><div style="position:absolute;left:1113px;top:248px;width:80px;height:80px;box-sizing:border-box;background:#044127"></div><div style="position:absolute;left:1191px;top:248px;width:2px;height:80px;box-sizing:border-box;background:rgba(2,8,22,.65)"></div><div style="position:absolute;left:1193px;top:248px;width:80px;height:80px;box-sizing:border-box;background:#044428"></div><div style="position:absolute;left:1271px;top:248px;width:2px;height:80px;box-sizing:border-box;background:rgba(2,8,22,.65)"></div><div style="position:absolute;left:1273px;top:248px;width:80px;height:80px;box-sizing:border-box;background:#044729"></div><div style="position:absolute;left:1351px;top:248px;width:2px;height:80px;box-sizing:border-box;background:rgba(2,8,22,.65)"></div><div style="position:absolute;left:1353px;top:248px;width:80px;height:80px;box-sizing:border-box;background:#044a2a"></div><div style="position:absolute;left:1431px;top:248px;width:2px;height:80px;box-sizing:border-box;background:rgba(2,8,22,.65)"></div><div style="position:absolute;left:1433px;top:248px;width:80px;height:80px;box-sizing:border-box;background:#044d2b"></div><div style="position:absolute;left:1511px;top:248px;width:2px;height:80px;box-sizing:border-box;background:rgba(2,8,22,.65)"></div><div style="position:absolute;left:1513px;top:248px;width:80px;height:80px;box-sizing:border-box;background:#04502c"></div><div style="position:absolute;left:1591px;top:248px;width:2px;height:80px;box-sizing:border-box;background:rgba(2,8,22,.65)"></div><div style="position:absolute;left:1593px;top:248px;width:80px;height:80px;box-sizing:border-box;background:#04522d"></div><div style="position:absolute;left:1671px;top:248px;width:2px;height:80px;box-sizing:border-box;background:rgba(2,8,22,.65)"></div><div style="position:absolute;left:1673px;top:248px;width:80px;height:80px;box-sizing:border-box;background:#04552e"></div><div style="position:absolute;left:1751px;top:248px;width:2px;height:80px;box-sizing:border-box;background:rgba(2,8,22,.65)"></div><div style="position:absolute;left:1753px;top:248px;width:80px;height:80px;box-sizing:border-box;background:#04582e"></div><div style="position:absolute;left:1831px;top:248px;width:2px;height:80px;box-sizing:border-box;background:rgba(2,8,22,.65)"></div><div style="position:absolute;left:1833px;top:248px;width:80px;height:80px;box-sizing:border-box;background:#045b2f"></div><div style="position:absolute;left:1911px;top:248px;width:2px;height:80px;box-sizing:border-box;background:rgba(2,8,22,.65)"></div><div style="position:absolute;left:1913px;top:248px;width:80px;height:80px;box-sizing:border-box;background:#045e30"></div><div style="position:absolute;left:1991px;top:248px;width:2px;height:80px;box-sizing:border-box;background:rgba(2,8,22,.65)"></div><div style="position:absolute;left:1993px;top:248px;width:80px;height:80px;box-sizing:border-box;background:#046131"></div><div style="position:absolute;left:2071px;top:248px;width:2px;height:80px;box-sizing:border-box;background:rgba(2,8,22,.65)"></div><div style="position:absolute;left:2073px;top:248px;width:80px;height:80px;box-sizing:border-box;background:#046432"></div><div style="position:absolute;left:2151px;top:248px;width:2px;height:80px;box-sizing:border-box;background:rgba(2,8,22,.65)"></div><div style="position:absolute;left:2153px;top:248px;width:80px;height:80px;box-sizing:border-box;background:#046733"></div><div style="position:absolute;left:2231px;top:248px;width:2px;height:80px;box-sizing:border-box;background:rgba(2,8,22,.65)"></div><div style="position:absolute;left:2233px;top:248px;width:80px;height:80px;box-sizing:border-box;background:#046934"></div><div style="position:absolute;left:2311px;top:248px;width:2px;height:80px;box-sizing:border-box;background:rgba(2,8,22,.65)"></div><div style="position:absolute;left:2313px;top:248px;width:80px;height:80px;box-sizing:border-box;background:#046c35"></div><div style="position:absolute;left:2391px;top:248px;width:2px;height:80px;box-sizing:border-box;background:rgba(2,8,22,.65)"></div><div style="position:absolute;left:2393px;top:248px;width:80px;height:80px;box-sizing:border-box;background:#046f36"></div><div style="position:absolute;left:2471px;top:248px;width:2px;height:80px;box-sizing:border-box;background:rgba(2,8,22,.65)"></div><div style="position:absolute;left:2473px;top:248px;width:80px;height:80px;box-sizing:border-box;background:#047237"></div><div style="position:absolute;left:2551px;top:248px;width:2px;height:80px;box-sizing:border-box;background:rgba(2,8,22,.65)"></div><div style="position:absolute;left:2553px;top:248px;width:80px;height:80px;box-sizing:border-box;background:#047538"></div><div style="position:absolute;left:2631px;top:248px;width:2px;height:80px;box-sizing:border-box;background:rgba(2,8,22,.65)"></div><div style="position:absolute;left:2633px;top:248px;width:80px;height:80px;box-sizing:border-box;background:#047838"></div><div style="position:absolute;left:2711px;top:248px;width:2px;height:80px;box-sizing:border-box;background:rgba(2,8,22,.65)"></div><div style="position:absolute;left:2713px;top:248px;width:80px;height:80px;box-sizing:border-box;background:#047b39"></div><div style="position:absolute;left:2791px;top:248px;width:2px;height:80px;box-sizing:border-box;background:rgba(2,8,22,.65)"></div><div style="position:absolute;left:0px;top:344px;width:2686px;height:2px;box-sizing:border-box;background:#222a36"></div><div style="position:absolute;left:391px;top:346px;width:2px;height:80px;box-sizing:border-box;background:#222a36"></div><div style="position:absolute;left:471px;top:346px;width:2px;height:80px;box-sizing:border-box;background:#222a36"></div><div style="position:absolute;left:551px;top:346px;width:2px;height:80px;box-sizing:border-box;background:#222a36"></div><div style="position:absolute;left:631px;top:346px;width:2px;height:80px;box-sizing:border-box;background:#222a36"></div><div style="position:absolute;left:711px;top:346px;width:2px;height:80px;box-sizing:border-box;background:#222a36"></div><div style="position:absolute;left:791px;top:346px;width:2px;height:80px;box-sizing:border-box;background:#222a36"></div><div style="position:absolute;left:871px;top:346px;width:2px;height:80px;box-sizing:border-box;background:#222a36"></div><div style="position:absolute;left:873px;top:346px;width:80px;height:80px;box-sizing:border-box;background:#042d20"></div><div style="position:absolute;left:951px;top:346px;width:2px;height:80px;box-sizing:border-box;background:rgba(2,8,22,.65)"></div><div style="position:absolute;left:953px;top:346px;width:80px;height:80px;box-sizing:border-box;background:#043021"></div><div style="position:absolute;left:1031px;top:346px;width:2px;height:80px;box-sizing:border-box;background:rgba(2,8,22,.65)"></div><div style="position:absolute;left:1033px;top:346px;width:80px;height:80px;box-sizing:border-box;background:#043322"></div><div style="position:absolute;left:1111px;top:346px;width:2px;height:80px;box-sizing:border-box;background:rgba(2,8,22,.65)"></div><div style="position:absolute;left:1113px;top:346px;width:80px;height:80px;box-sizing:border-box;background:#043623"></div><div style="position:absolute;left:1191px;top:346px;width:2px;height:80px;box-sizing:border-box;background:rgba(2,8,22,.65)"></div><div style="position:absolute;left:1193px;top:346px;width:80px;height:80px;box-sizing:border-box;background:#043924"></div><div style="position:absolute;left:1271px;top:346px;width:2px;height:80px;box-sizing:border-box;background:rgba(2,8,22,.65)"></div><div style="position:absolute;left:1273px;top:346px;width:80px;height:80px;box-sizing:border-box;background:#043c25"></div><div style="position:absolute;left:1351px;top:346px;width:2px;height:80px;box-sizing:border-box;background:rgba(2,8,22,.65)"></div><div style="position:absolute;left:1353px;top:346px;width:80px;height:80px;box-sizing:border-box;background:#043f27"></div><div style="position:absolute;left:1431px;top:346px;width:2px;height:80px;box-sizing:border-box;background:rgba(2,8,22,.65)"></div><div style="position:absolute;left:1433px;top:346px;width:80px;height:80px;box-sizing:border-box;background:#044228"></div><div style="position:absolute;left:1511px;top:346px;width:2px;height:80px;box-sizing:border-box;background:rgba(2,8,22,.65)"></div><div style="position:absolute;left:1513px;top:346px;width:80px;height:80px;box-sizing:border-box;background:#044529"></div><div style="position:absolute;left:1591px;top:346px;width:2px;height:80px;box-sizing:border-box;background:rgba(2,8,22,.65)"></div><div style="position:absolute;left:1593px;top:346px;width:80px;height:80px;box-sizing:border-box;background:#04482a"></div><div style="position:absolute;left:1671px;top:346px;width:2px;height:80px;box-sizing:border-box;background:rgba(2,8,22,.65)"></div><div style="position:absolute;left:1673px;top:346px;width:80px;height:80px;box-sizing:border-box;background:#044c2b"></div><div style="position:absolute;left:1751px;top:346px;width:2px;height:80px;box-sizing:border-box;background:rgba(2,8,22,.65)"></div><div style="position:absolute;left:1753px;top:346px;width:80px;height:80px;box-sizing:border-box;background:#044f2c"></div><div style="position:absolute;left:1831px;top:346px;width:2px;height:80px;box-sizing:border-box;background:rgba(2,8,22,.65)"></div><div style="position:absolute;left:1833px;top:346px;width:80px;height:80px;box-sizing:border-box;background:#04522d"></div><div style="position:absolute;left:1911px;top:346px;width:2px;height:80px;box-sizing:border-box;background:rgba(2,8,22,.65)"></div><div style="position:absolute;left:1913px;top:346px;width:80px;height:80px;box-sizing:border-box;background:#04552e"></div><div style="position:absolute;left:1991px;top:346px;width:2px;height:80px;box-sizing:border-box;background:rgba(2,8,22,.65)"></div><div style="position:absolute;left:1993px;top:346px;width:80px;height:80px;box-sizing:border-box;background:#04582f"></div><div style="position:absolute;left:2071px;top:346px;width:2px;height:80px;box-sizing:border-box;background:rgba(2,8,22,.65)"></div><div style="position:absolute;left:2073px;top:346px;width:80px;height:80px;box-sizing:border-box;background:#045b30"></div><div style="position:absolute;left:2151px;top:346px;width:2px;height:80px;box-sizing:border-box;background:rgba(2,8,22,.65)"></div><div style="position:absolute;left:2153px;top:346px;width:80px;height:80px;box-sizing:border-box;background:#045e31"></div><div style="position:absolute;left:2231px;top:346px;width:2px;height:80px;box-sizing:border-box;background:rgba(2,8,22,.65)"></div><div style="position:absolute;left:2233px;top:346px;width:80px;height:80px;box-sizing:border-box;background:#046133"></div><div style="position:absolute;left:2311px;top:346px;width:2px;height:80px;box-sizing:border-box;background:rgba(2,8,22,.65)"></div><div style="position:absolute;left:2313px;top:346px;width:80px;height:80px;box-sizing:border-box;background:#046434"></div><div style="position:absolute;left:2391px;top:346px;width:2px;height:80px;box-sizing:border-box;background:rgba(2,8,22,.65)"></div><div style="position:absolute;left:2393px;top:346px;width:80px;height:80px;box-sizing:border-box;background:#046735"></div><div style="position:absolute;left:2471px;top:346px;width:2px;height:80px;box-sizing:border-box;background:rgba(2,8,22,.65)"></div><div style="position:absolute;left:2473px;top:346px;width:80px;height:80px;box-sizing:border-box;background:#046a36"></div><div style="position:absolute;left:2551px;top:346px;width:2px;height:80px;box-sizing:border-box;background:rgba(2,8,22,.65)"></div><div style="position:absolute;left:2553px;top:346px;width:80px;height:80px;box-sizing:border-box;background:#046d37"></div><div style="position:absolute;left:2631px;top:346px;width:2px;height:80px;box-sizing:border-box;background:rgba(2,8,22,.65)"></div><div style="position:absolute;left:2633px;top:346px;width:80px;height:80px;box-sizing:border-box;background:#047038"></div><div style="position:absolute;left:2711px;top:346px;width:2px;height:80px;box-sizing:border-box;background:rgba(2,8,22,.65)"></div><div style="position:absolute;left:2713px;top:346px;width:80px;height:80px;box-sizing:border-box;background:#047339"></div><div style="position:absolute;left:2791px;top:346px;width:2px;height:80px;box-sizing:border-box;background:rgba(2,8,22,.65)"></div><div style="position:absolute;left:0px;top:442px;width:2686px;height:2px;box-sizing:border-box;background:#222a36"></div><div style="position:absolute;left:391px;top:444px;width:2px;height:80px;box-sizing:border-box;background:#222a36"></div><div style="position:absolute;left:471px;top:444px;width:2px;height:80px;box-sizing:border-box;background:#222a36"></div><div style="position:absolute;left:551px;top:444px;width:2px;height:80px;box-sizing:border-box;background:#222a36"></div><div style="position:absolute;left:631px;top:444px;width:2px;height:80px;box-sizing:border-box;background:#222a36"></div><div style="position:absolute;left:711px;top:444px;width:2px;height:80px;box-sizing:border-box;background:#222a36"></div><div style="position:absolute;left:791px;top:444px;width:2px;height:80px;box-sizing:border-box;background:#222a36"></div><div style="position:absolute;left:871px;top:444px;width:2px;height:80px;box-sizing:border-box;background:#222a36"></div><div style="position:absolute;left:951px;top:444px;width:2px;height:80px;box-sizing:border-box;background:#222a36"></div><div style="position:absolute;left:1031px;top:444px;width:2px;height:80px;box-sizing:border-box;background:#222a36"></div><div style="position:absolute;left:1111px;top:444px;width:2px;height:80px;box-sizing:border-box;background:#222a36"></div><div style="position:absolute;left:1191px;top:444px;width:2px;height:80px;box-sizing:border-box;background:#222a36"></div><div style="position:absolute;left:1271px;top:444px;width:2px;height:80px;box-sizing:border-box;background:#222a36"></div><div style="position:absolute;left:1351px;top:444px;width:2px;height:80px;box-sizing:border-box;background:#222a36"></div><div style="position:absolute;left:1431px;top:444px;width:2px;height:80px;box-sizing:border-box;background:#222a36"></div><div style="position:absolute;left:1511px;top:444px;width:2px;height:80px;box-sizing:border-box;background:#222a36"></div><div style="position:absolute;left:1591px;top:444px;width:2px;height:80px;box-sizing:border-box;background:#222a36"></div><div style="position:absolute;left:1671px;top:444px;width:2px;height:80px;box-sizing:border-box;background:#222a36"></div><div style="position:absolute;left:1751px;top:444px;width:2px;height:80px;box-sizing:border-box;background:#222a36"></div><div style="position:absolute;left:1831px;top:444px;width:2px;height:80px;box-sizing:border-box;background:#222a36"></div><div style="position:absolute;left:1911px;top:444px;width:2px;height:80px;box-sizing:border-box;background:#222a36"></div><div style="position:absolute;left:1991px;top:444px;width:2px;height:80px;box-sizing:border-box;background:#222a36"></div><div style="position:absolute;left:2071px;top:444px;width:2px;height:80px;box-sizing:border-box;background:#222a36"></div><div style="position:absolute;left:2151px;top:444px;width:2px;height:80px;box-sizing:border-box;background:#222a36"></div><div style="position:absolute;left:2231px;top:444px;width:2px;height:80px;box-sizing:border-box;background:#222a36"></div><div style="position:absolute;left:2311px;top:444px;width:2px;height:80px;box-sizing:border-box;background:#222a36"></div><div style="position:absolute;left:2391px;top:444px;width:2px;height:80px;box-sizing:border-box;background:#222a36"></div><div style="position:absolute;left:2471px;top:444px;width:2px;height:80px;box-sizing:border-box;background:#222a36"></div><div style="position:absolute;left:2551px;top:444px;width:2px;height:80px;box-sizing:border-box;background:#222a36"></div><div style="position:absolute;left:2631px;top:444px;width:2px;height:80px;box-sizing:border-box;background:#222a36"></div><div style="position:absolute;left:2711px;top:444px;width:2px;height:80px;box-sizing:border-box;background:#222a36"></div><div style="position:absolute;left:2791px;top:444px;width:2px;height:80px;box-sizing:border-box;background:#222a36"></div><div style="position:absolute;left:0px;top:540px;width:2686px;height:2px;box-sizing:border-box;background:#222a36"></div><div style="position:absolute;left:391px;top:542px;width:2px;height:80px;box-sizing:border-box;background:#222a36"></div><div style="position:absolute;left:471px;top:542px;width:2px;height:80px;box-sizing:border-box;background:#222a36"></div><div style="position:absolute;left:551px;top:542px;width:2px;height:80px;box-sizing:border-box;background:#222a36"></div><div style="position:absolute;left:631px;top:542px;width:2px;height:80px;box-sizing:border-box;background:#222a36"></div><div style="position:absolute;left:711px;top:542px;width:2px;height:80px;box-sizing:border-box;background:#222a36"></div><div style="position:absolute;left:791px;top:542px;width:2px;height:80px;box-sizing:border-box;background:#222a36"></div><div style="position:absolute;left:871px;top:542px;width:2px;height:80px;box-sizing:border-box;background:#222a36"></div><div style="position:absolute;left:951px;top:542px;width:2px;height:80px;box-sizing:border-box;background:#222a36"></div><div style="position:absolute;left:1031px;top:542px;width:2px;height:80px;box-sizing:border-box;background:#222a36"></div><div style="position:absolute;left:1111px;top:542px;width:2px;height:80px;box-sizing:border-box;background:#222a36"></div><div style="position:absolute;left:1191px;top:542px;width:2px;height:80px;box-sizing:border-box;background:#222a36"></div><div style="position:absolute;left:1271px;top:542px;width:2px;height:80px;box-sizing:border-box;background:#222a36"></div><div style="position:absolute;left:1351px;top:542px;width:2px;height:80px;box-sizing:border-box;background:#222a36"></div><div style="position:absolute;left:1431px;top:542px;width:2px;height:80px;box-sizing:border-box;background:#222a36"></div><div style="position:absolute;left:1511px;top:542px;width:2px;height:80px;box-sizing:border-box;background:#222a36"></div><div style="position:absolute;left:1591px;top:542px;width:2px;height:80px;box-sizing:border-box;background:#222a36"></div><div style="position:absolute;left:1671px;top:542px;width:2px;height:80px;box-sizing:border-box;background:#222a36"></div><div style="position:absolute;left:1751px;top:542px;width:2px;height:80px;box-sizing:border-box;background:#222a36"></div><div style="position:absolute;left:1831px;top:542px;width:2px;height:80px;box-sizing:border-box;background:#222a36"></div><div style="position:absolute;left:1911px;top:542px;width:2px;height:80px;box-sizing:border-box;background:#222a36"></div><div style="position:absolute;left:1991px;top:542px;width:2px;height:80px;box-sizing:border-box;background:#222a36"></div><div style="position:absolute;left:2071px;top:542px;width:2px;height:80px;box-sizing:border-box;background:#222a36"></div><div style="position:absolute;left:2151px;top:542px;width:2px;height:80px;box-sizing:border-box;background:#222a36"></div><div style="position:absolute;left:2231px;top:542px;width:2px;height:80px;box-sizing:border-box;background:#222a36"></div><div style="position:absolute;left:2311px;top:542px;width:2px;height:80px;box-sizing:border-box;background:#222a36"></div><div style="position:absolute;left:2391px;top:542px;width:2px;height:80px;box-sizing:border-box;background:#222a36"></div><div style="position:absolute;left:2471px;top:542px;width:2px;height:80px;box-sizing:border-box;background:#222a36"></div><div style="position:absolute;left:2551px;top:542px;width:2px;height:80px;box-sizing:border-box;background:#222a36"></div><div style="position:absolute;left:2631px;top:542px;width:2px;height:80px;box-sizing:border-box;background:#222a36"></div><div style="position:absolute;left:2711px;top:542px;width:2px;height:80px;box-sizing:border-box;background:#222a36"></div><div style="position:absolute;left:2791px;top:542px;width:2px;height:80px;box-sizing:border-box;background:#222a36"></div><div style="position:absolute;left:0px;top:638px;width:2686px;height:2px;box-sizing:border-box;background:#222a36"></div><div style="position:absolute;left:391px;top:640px;width:2px;height:80px;box-sizing:border-box;background:#222a36"></div><div style="position:absolute;left:471px;top:640px;width:2px;height:80px;box-sizing:border-box;background:#222a36"></div><div style="position:absolute;left:551px;top:640px;width:2px;height:80px;box-sizing:border-box;background:#222a36"></div><div style="position:absolute;left:631px;top:640px;width:2px;height:80px;box-sizing:border-box;background:#222a36"></div><div style="position:absolute;left:711px;top:640px;width:2px;height:80px;box-sizing:border-box;background:#222a36"></div><div style="position:absolute;left:791px;top:640px;width:2px;height:80px;box-sizing:border-box;background:#222a36"></div><div style="position:absolute;left:871px;top:640px;width:2px;height:80px;box-sizing:border-box;background:#222a36"></div><div style="position:absolute;left:951px;top:640px;width:2px;height:80px;box-sizing:border-box;background:#222a36"></div><div style="position:absolute;left:1031px;top:640px;width:2px;height:80px;box-sizing:border-box;background:#222a36"></div><div style="position:absolute;left:1111px;top:640px;width:2px;height:80px;box-sizing:border-box;background:#222a36"></div><div style="position:absolute;left:1191px;top:640px;width:2px;height:80px;box-sizing:border-box;background:#222a36"></div><div style="position:absolute;left:1271px;top:640px;width:2px;height:80px;box-sizing:border-box;background:#222a36"></div><div style="position:absolute;left:1351px;top:640px;width:2px;height:80px;box-sizing:border-box;background:#222a36"></div><div style="position:absolute;left:1431px;top:640px;width:2px;height:80px;box-sizing:border-box;background:#222a36"></div><div style="position:absolute;left:1511px;top:640px;width:2px;height:80px;box-sizing:border-box;background:#222a36"></div><div style="position:absolute;left:1591px;top:640px;width:2px;height:80px;box-sizing:border-box;background:#222a36"></div><div style="position:absolute;left:1671px;top:640px;width:2px;height:80px;box-sizing:border-box;background:#222a36"></div><div style="position:absolute;left:1751px;top:640px;width:2px;height:80px;box-sizing:border-box;background:#222a36"></div><div style="position:absolute;left:1831px;top:640px;width:2px;height:80px;box-sizing:border-box;background:#222a36"></div><div style="position:absolute;left:1911px;top:640px;width:2px;height:80px;box-sizing:border-box;background:#222a36"></div><div style="position:absolute;left:1991px;top:640px;width:2px;height:80px;box-sizing:border-box;background:#222a36"></div><div style="position:absolute;left:2071px;top:640px;width:2px;height:80px;box-sizing:border-box;background:#222a36"></div><div style="position:absolute;left:2151px;top:640px;width:2px;height:80px;box-sizing:border-box;background:#222a36"></div><div style="position:absolute;left:2231px;top:640px;width:2px;height:80px;box-sizing:border-box;background:#222a36"></div><div style="position:absolute;left:2311px;top:640px;width:2px;height:80px;box-sizing:border-box;background:#222a36"></div><div style="position:absolute;left:2391px;top:640px;width:2px;height:80px;box-sizing:border-box;background:#222a36"></div><div style="position:absolute;left:2471px;top:640px;width:2px;height:80px;box-sizing:border-box;background:#222a36"></div><div style="position:absolute;left:2551px;top:640px;width:2px;height:80px;box-sizing:border-box;background:#222a36"></div><div style="position:absolute;left:2631px;top:640px;width:2px;height:80px;box-sizing:border-box;background:#222a36"></div><div style="position:absolute;left:2711px;top:640px;width:2px;height:80px;box-sizing:border-box;background:#222a36"></div><div style="position:absolute;left:2791px;top:640px;width:2px;height:80px;box-sizing:border-box;background:#222a36"></div><div style="position:absolute;left:0px;top:736px;width:2686px;height:2px;box-sizing:border-box;background:#222a36"></div><div style="position:absolute;left:391px;top:738px;width:2px;height:80px;box-sizing:border-box;background:#222a36"></div><div style="position:absolute;left:471px;top:738px;width:2px;height:80px;box-sizing:border-box;background:#222a36"></div><div style="position:absolute;left:551px;top:738px;width:2px;height:80px;box-sizing:border-box;background:#222a36"></div><div style="position:absolute;left:631px;top:738px;width:2px;height:80px;box-sizing:border-box;background:#222a36"></div><div style="position:absolute;left:711px;top:738px;width:2px;height:80px;box-sizing:border-box;background:#222a36"></div><div style="position:absolute;left:791px;top:738px;width:2px;height:80px;box-sizing:border-box;background:#222a36"></div><div style="position:absolute;left:871px;top:738px;width:2px;height:80px;box-sizing:border-box;background:#222a36"></div><div style="position:absolute;left:951px;top:738px;width:2px;height:80px;box-sizing:border-box;background:#222a36"></div><div style="position:absolute;left:1031px;top:738px;width:2px;height:80px;box-sizing:border-box;background:#222a36"></div><div style="position:absolute;left:1111px;top:738px;width:2px;height:80px;box-sizing:border-box;background:#222a36"></div><div style="position:absolute;left:1191px;top:738px;width:2px;height:80px;box-sizing:border-box;background:#222a36"></div><div style="position:absolute;left:1271px;top:738px;width:2px;height:80px;box-sizing:border-box;background:#222a36"></div><div style="position:absolute;left:1351px;top:738px;width:2px;height:80px;box-sizing:border-box;background:#222a36"></div><div style="position:absolute;left:1431px;top:738px;width:2px;height:80px;box-sizing:border-box;background:#222a36"></div><div style="position:absolute;left:1511px;top:738px;width:2px;height:80px;box-sizing:border-box;background:#222a36"></div><div style="position:absolute;left:1591px;top:738px;width:2px;height:80px;box-sizing:border-box;background:#222a36"></div><div style="position:absolute;left:1671px;top:738px;width:2px;height:80px;box-sizing:border-box;background:#222a36"></div><div style="position:absolute;left:1751px;top:738px;width:2px;height:80px;box-sizing:border-box;background:#222a36"></div><div style="position:absolute;left:1831px;top:738px;width:2px;height:80px;box-sizing:border-box;background:#222a36"></div><div style="position:absolute;left:1911px;top:738px;width:2px;height:80px;box-sizing:border-box;background:#222a36"></div><div style="position:absolute;left:1991px;top:738px;width:2px;height:80px;box-sizing:border-box;background:#222a36"></div><div style="position:absolute;left:2071px;top:738px;width:2px;height:80px;box-sizing:border-box;background:#222a36"></div><div style="position:absolute;left:2151px;top:738px;width:2px;height:80px;box-sizing:border-box;background:#222a36"></div><div style="position:absolute;left:2231px;top:738px;width:2px;height:80px;box-sizing:border-box;background:#222a36"></div><div style="position:absolute;left:2311px;top:738px;width:2px;height:80px;box-sizing:border-box;background:#222a36"></div><div style="position:absolute;left:2391px;top:738px;width:2px;height:80px;box-sizing:border-box;background:#222a36"></div><div style="position:absolute;left:2471px;top:738px;width:2px;height:80px;box-sizing:border-box;background:#222a36"></div><div style="position:absolute;left:2551px;top:738px;width:2px;height:80px;box-sizing:border-box;background:#222a36"></div><div style="position:absolute;left:2631px;top:738px;width:2px;height:80px;box-sizing:border-box;background:#222a36"></div><div style="position:absolute;left:2711px;top:738px;width:2px;height:80px;box-sizing:border-box;background:#222a36"></div><div style="position:absolute;left:2791px;top:738px;width:2px;height:80px;box-sizing:border-box;background:#222a36"></div><div style="position:absolute;left:0px;top:834px;width:2686px;height:2px;box-sizing:border-box;background:#222a36"></div><div style="position:absolute;left:391px;top:836px;width:2px;height:80px;box-sizing:border-box;background:#222a36"></div><div style="position:absolute;left:471px;top:836px;width:2px;height:80px;box-sizing:border-box;background:#222a36"></div><div style="position:absolute;left:551px;top:836px;width:2px;height:80px;box-sizing:border-box;background:#222a36"></div><div style="position:absolute;left:631px;top:836px;width:2px;height:80px;box-sizing:border-box;background:#222a36"></div><div style="position:absolute;left:711px;top:836px;width:2px;height:80px;box-sizing:border-box;background:#222a36"></div><div style="position:absolute;left:791px;top:836px;width:2px;height:80px;box-sizing:border-box;background:#222a36"></div><div style="position:absolute;left:871px;top:836px;width:2px;height:80px;box-sizing:border-box;background:#222a36"></div><div style="position:absolute;left:951px;top:836px;width:2px;height:80px;box-sizing:border-box;background:#222a36"></div><div style="position:absolute;left:1031px;top:836px;width:2px;height:80px;box-sizing:border-box;background:#222a36"></div><div style="position:absolute;left:1111px;top:836px;width:2px;height:80px;box-sizing:border-box;background:#222a36"></div><div style="position:absolute;left:1191px;top:836px;width:2px;height:80px;box-sizing:border-box;background:#222a36"></div><div style="position:absolute;left:1271px;top:836px;width:2px;height:80px;box-sizing:border-box;background:#222a36"></div><div style="position:absolute;left:1351px;top:836px;width:2px;height:80px;box-sizing:border-box;background:#222a36"></div><div style="position:absolute;left:1431px;top:836px;width:2px;height:80px;box-sizing:border-box;background:#222a36"></div><div style="position:absolute;left:1511px;top:836px;width:2px;height:80px;box-sizing:border-box;background:#222a36"></div><div style="position:absolute;left:1591px;top:836px;width:2px;height:80px;box-sizing:border-box;background:#222a36"></div><div style="position:absolute;left:1671px;top:836px;width:2px;height:80px;box-sizing:border-box;background:#222a36"></div><div style="position:absolute;left:1751px;top:836px;width:2px;height:80px;box-sizing:border-box;background:#222a36"></div><div style="position:absolute;left:1831px;top:836px;width:2px;height:80px;box-sizing:border-box;background:#222a36"></div><div style="position:absolute;left:1911px;top:836px;width:2px;height:80px;box-sizing:border-box;background:#222a36"></div><div style="position:absolute;left:1991px;top:836px;width:2px;height:80px;box-sizing:border-box;background:#222a36"></div><div style="position:absolute;left:2071px;top:836px;width:2px;height:80px;box-sizing:border-box;background:#222a36"></div><div style="position:absolute;left:2151px;top:836px;width:2px;height:80px;box-sizing:border-box;background:#222a36"></div><div style="position:absolute;left:2231px;top:836px;width:2px;height:80px;box-sizing:border-box;background:#222a36"></div><div style="position:absolute;left:2311px;top:836px;width:2px;height:80px;box-sizing:border-box;background:#222a36"></div><div style="position:absolute;left:2391px;top:836px;width:2px;height:80px;box-sizing:border-box;background:#222a36"></div><div style="position:absolute;left:2471px;top:836px;width:2px;height:80px;box-sizing:border-box;background:#222a36"></div><div style="position:absolute;left:2551px;top:836px;width:2px;height:80px;box-sizing:border-box;background:#222a36"></div><div style="position:absolute;left:2631px;top:836px;width:2px;height:80px;box-sizing:border-box;background:#222a36"></div><div style="position:absolute;left:2711px;top:836px;width:2px;height:80px;box-sizing:border-box;background:#222a36"></div><div style="position:absolute;left:2791px;top:836px;width:2px;height:80px;box-sizing:border-box;background:#222a36"></div><div style="position:absolute;left:0px;top:932px;width:2686px;height:2px;box-sizing:border-box;background:#222a36"></div><div style="position:absolute;left:391px;top:934px;width:2px;height:80px;box-sizing:border-box;background:#222a36"></div><div style="position:absolute;left:471px;top:934px;width:2px;height:80px;box-sizing:border-box;background:#222a36"></div><div style="position:absolute;left:551px;top:934px;width:2px;height:80px;box-sizing:border-box;background:#222a36"></div><div style="position:absolute;left:631px;top:934px;width:2px;height:80px;box-sizing:border-box;background:#222a36"></div><div style="position:absolute;left:711px;top:934px;width:2px;height:80px;box-sizing:border-box;background:#222a36"></div><div style="position:absolute;left:791px;top:934px;width:2px;height:80px;box-sizing:border-box;background:#222a36"></div><div style="position:absolute;left:871px;top:934px;width:2px;height:80px;box-sizing:border-box;background:#222a36"></div><div style="position:absolute;left:951px;top:934px;width:2px;height:80px;box-sizing:border-box;background:#222a36"></div><div style="position:absolute;left:1031px;top:934px;width:2px;height:80px;box-sizing:border-box;background:#222a36"></div><div style="position:absolute;left:1111px;top:934px;width:2px;height:80px;box-sizing:border-box;background:#222a36"></div><div style="position:absolute;left:1191px;top:934px;width:2px;height:80px;box-sizing:border-box;background:#222a36"></div><div style="position:absolute;left:1271px;top:934px;width:2px;height:80px;box-sizing:border-box;background:#222a36"></div><div style="position:absolute;left:1351px;top:934px;width:2px;height:80px;box-sizing:border-box;background:#222a36"></div><div style="position:absolute;left:1431px;top:934px;width:2px;height:80px;box-sizing:border-box;background:#222a36"></div><div style="position:absolute;left:1511px;top:934px;width:2px;height:80px;box-sizing:border-box;background:#222a36"></div><div style="position:absolute;left:1591px;top:934px;width:2px;height:80px;box-sizing:border-box;background:#222a36"></div><div style="position:absolute;left:1671px;top:934px;width:2px;height:80px;box-sizing:border-box;background:#222a36"></div><div style="position:absolute;left:1751px;top:934px;width:2px;height:80px;box-sizing:border-box;background:#222a36"></div><div style="position:absolute;left:1831px;top:934px;width:2px;height:80px;box-sizing:border-box;background:#222a36"></div><div style="position:absolute;left:1911px;top:934px;width:2px;height:80px;box-sizing:border-box;background:#222a36"></div><div style="position:absolute;left:1991px;top:934px;width:2px;height:80px;box-sizing:border-box;background:#222a36"></div><div style="position:absolute;left:2071px;top:934px;width:2px;height:80px;box-sizing:border-box;background:#222a36"></div><div style="position:absolute;left:2151px;top:934px;width:2px;height:80px;box-sizing:border-box;background:#222a36"></div><div style="position:absolute;left:2231px;top:934px;width:2px;height:80px;box-sizing:border-box;background:#222a36"></div><div style="position:absolute;left:2311px;top:934px;width:2px;height:80px;box-sizing:border-box;background:#222a36"></div><div style="position:absolute;left:2391px;top:934px;width:2px;height:80px;box-sizing:border-box;background:#222a36"></div><div style="position:absolute;left:2471px;top:934px;width:2px;height:80px;box-sizing:border-box;background:#222a36"></div><div style="position:absolute;left:2551px;top:934px;width:2px;height:80px;box-sizing:border-box;background:#222a36"></div><div style="position:absolute;left:2631px;top:934px;width:2px;height:80px;box-sizing:border-box;background:#222a36"></div><div style="position:absolute;left:2711px;top:934px;width:2px;height:80px;box-sizing:border-box;background:#222a36"></div><div style="position:absolute;left:2791px;top:934px;width:2px;height:80px;box-sizing:border-box;background:#222a36"></div><div style="position:absolute;left:0px;top:1030px;width:2686px;height:2px;box-sizing:border-box;background:#222a36"></div><div style="position:absolute;left:391px;top:1032px;width:2px;height:80px;box-sizing:border-box;background:#222a36"></div><div style="position:absolute;left:471px;top:1032px;width:2px;height:80px;box-sizing:border-box;background:#222a36"></div><div style="position:absolute;left:551px;top:1032px;width:2px;height:80px;box-sizing:border-box;background:#222a36"></div><div style="position:absolute;left:631px;top:1032px;width:2px;height:80px;box-sizing:border-box;background:#222a36"></div><div style="position:absolute;left:711px;top:1032px;width:2px;height:80px;box-sizing:border-box;background:#222a36"></div><div style="position:absolute;left:791px;top:1032px;width:2px;height:80px;box-sizing:border-box;background:#222a36"></div><div style="position:absolute;left:871px;top:1032px;width:2px;height:80px;box-sizing:border-box;background:#222a36"></div><div style="position:absolute;left:951px;top:1032px;width:2px;height:80px;box-sizing:border-box;background:#222a36"></div><div style="position:absolute;left:1031px;top:1032px;width:2px;height:80px;box-sizing:border-box;background:#222a36"></div><div style="position:absolute;left:1111px;top:1032px;width:2px;height:80px;box-sizing:border-box;background:#222a36"></div><div style="position:absolute;left:1191px;top:1032px;width:2px;height:80px;box-sizing:border-box;background:#222a36"></div><div style="position:absolute;left:1271px;top:1032px;width:2px;height:80px;box-sizing:border-box;background:#222a36"></div><div style="position:absolute;left:1351px;top:1032px;width:2px;height:80px;box-sizing:border-box;background:#222a36"></div><div style="position:absolute;left:1431px;top:1032px;width:2px;height:80px;box-sizing:border-box;background:#222a36"></div><div style="position:absolute;left:1511px;top:1032px;width:2px;height:80px;box-sizing:border-box;background:#222a36"></div><div style="position:absolute;left:1591px;top:1032px;width:2px;height:80px;box-sizing:border-box;background:#222a36"></div><div style="position:absolute;left:1671px;top:1032px;width:2px;height:80px;box-sizing:border-box;background:#222a36"></div><div style="position:absolute;left:1751px;top:1032px;width:2px;height:80px;box-sizing:border-box;background:#222a36"></div><div style="position:absolute;left:1831px;top:1032px;width:2px;height:80px;box-sizing:border-box;background:#222a36"></div><div style="position:absolute;left:1911px;top:1032px;width:2px;height:80px;box-sizing:border-box;background:#222a36"></div><div style="position:absolute;left:1991px;top:1032px;width:2px;height:80px;box-sizing:border-box;background:#222a36"></div><div style="position:absolute;left:2071px;top:1032px;width:2px;height:80px;box-sizing:border-box;background:#222a36"></div><div style="position:absolute;left:2151px;top:1032px;width:2px;height:80px;box-sizing:border-box;background:#222a36"></div><div style="position:absolute;left:2231px;top:1032px;width:2px;height:80px;box-sizing:border-box;background:#222a36"></div><div style="position:absolute;left:2311px;top:1032px;width:2px;height:80px;box-sizing:border-box;background:#222a36"></div><div style="position:absolute;left:2391px;top:1032px;width:2px;height:80px;box-sizing:border-box;background:#222a36"></div><div style="position:absolute;left:2471px;top:1032px;width:2px;height:80px;box-sizing:border-box;background:#222a36"></div><div style="position:absolute;left:2551px;top:1032px;width:2px;height:80px;box-sizing:border-box;background:#222a36"></div><div style="position:absolute;left:2631px;top:1032px;width:2px;height:80px;box-sizing:border-box;background:#222a36"></div><div style="position:absolute;left:2711px;top:1032px;width:2px;height:80px;box-sizing:border-box;background:#222a36"></div><div style="position:absolute;left:2791px;top:1032px;width:2px;height:80px;box-sizing:border-box;background:#222a36"></div><div style="position:absolute;left:0px;top:1128px;width:2686px;height:2px;box-sizing:border-box;background:#222a36"></div><div style="position:absolute;left:0px;top:0px;width:360px;height:1129px;box-sizing:border-box;background:#020816"></div><div style="position:absolute;left:359px;top:0px;width:2px;height:1129px;box-sizing:border-box;background:#222a36"></div><div style="position:absolute;left:0px;top:65px;width:360px;height:2px;box-sizing:border-box;background:#1f2937"></div><div style="position:absolute;left:0px;top:147px;width:360px;height:2px;box-sizing:border-box;background:#1f2937"></div><div style="position:absolute;left:0px;top:246px;width:360px;height:2px;box-sizing:border-box;background:#222a36"></div><div style="position:absolute;left:0px;top:344px;width:360px;height:2px;box-sizing:border-box;background:#222a36"></div><div style="position:absolute;left:0px;top:442px;width:360px;height:2px;box-sizing:border-box;background:#222a36"></div><div style="position:absolute;left:0px;top:540px;width:360px;height:2px;box-sizing:border-box;background:#222a36"></div><div style="position:absolute;left:0px;top:638px;width:360px;height:2px;box-sizing:border-box;background:#222a36"></div><div style="position:absolute;left:0px;top:736px;width:360px;height:2px;box-sizing:border-box;background:#222a36"></div><div style="position:absolute;left:0px;top:834px;width:360px;height:2px;box-sizing:border-box;background:#222a36"></div><div style="position:absolute;left:0px;top:932px;width:360px;height:2px;box-sizing:border-box;background:#222a36"></div><div style="position:absolute;left:0px;top:1030px;width:360px;height:2px;box-sizing:border-box;background:#222a36"></div><div style="position:absolute;left:0px;top:1128px;width:360px;height:2px;box-sizing:border-box;background:#222a36"></div><div style="position:absolute;left:18px;top:22.26px;font-size:24.5px;line-height:24.5px;color:#959eb0;font-weight:700;white-space:nowrap;">Month</div><div style="position:absolute;left:18px;top:95.30px;font-size:28px;line-height:28px;color:#f9fafb;font-weight:700;white-space:nowrap;">Aspect</div><svg style="position:absolute;left:0;top:0" width="400" height="1200"><rect x="22.0" y="187.5" width="23" height="23" rx="2.5" stroke="#d81b2e" stroke-width="3" fill="none"/></svg><div style="position:absolute;left:65px;top:171px;width:24px;height:24px;border-radius:5px;background:linear-gradient(180deg,#c77ddf 0%,#a24fcb 55%,#8e3cb8 100%)"><svg width="24" height="24" viewBox="0 0 24 24" fill="none" stroke="#fbe8ff" stroke-width="1.8" stroke-linecap="round" stroke-linejoin="round"><circle cx="7.2" cy="8" r="2.4"/><path d="M7.2 5.6C11 4.3 16.5 5 19.6 8.8"/><circle cx="16.6" cy="15.6" r="2.4"/><path d="M16.6 18C13 19.3 7.8 18.8 4.6 15"/></svg></div><div style="position:absolute;left:65px;top:203px;width:24px;height:24px;border-radius:5px;background:linear-gradient(180deg,#c77ddf 0%,#a24fcb 55%,#8e3cb8 100%)"><svg width="24" height="24" viewBox="0 0 24 24" fill="none" stroke="#fbe8ff" stroke-width="1.8" stroke-linecap="round" stroke-linejoin="round"><path d="M5 19h14M5 15.5h4.5a4.5 4.5 0 1 1 5 0H19"/></svg></div><div style="position:absolute;left:99px;top:170.68px;font-size:24px;line-height:24px;color:#f9fafb;font-weight:700;white-space:nowrap;">Jupiter</div><div style="position:absolute;left:99px;top:201.54px;font-size:25px;line-height:25px;color:#a3abbd;font-weight:400;white-space:nowrap;">Sun</div><svg style="position:absolute;left:0;top:0" width="400" height="1200"><g stroke="#22a04b" stroke-width="2.4" stroke-linecap="round"><path d="M23.5 297H43.5"/><path d="M28.3 288L38.7 306"/><path d="M38.7 288L28.3 306"/></g></svg><div style="position:absolute;left:65px;top:269px;width:24px;height:24px;border-radius:5px;background:linear-gradient(180deg,#c77ddf 0%,#a24fcb 55%,#8e3cb8 100%)"><svg width="24" height="24" viewBox="0 0 24 24" fill="none" stroke="#fbe8ff" stroke-width="1.8" stroke-linecap="round" stroke-linejoin="round"><circle cx="7.2" cy="8" r="2.4"/><path d="M7.2 5.6C11 4.3 16.5 5 19.6 8.8"/><circle cx="16.6" cy="15.6" r="2.4"/><path d="M16.6 18C13 19.3 7.8 18.8 4.6 15"/></svg></div><div style="position:absolute;left:65px;top:301px;width:24px;height:24px;border-radius:5px;background:linear-gradient(180deg,#c77ddf 0%,#a24fcb 55%,#8e3cb8 100%)"><svg width="24" height="24" viewBox="0 0 24 24" fill="none" stroke="#fbe8ff" stroke-width="1.8" stroke-linecap="round" stroke-linejoin="round"><circle cx="12" cy="14.5" r="4.5"/><path d="M6 5c1 3 3.5 5 6 5s5-2 6-5"/></svg></div><div style="position:absolute;left:99px;top:268.68px;font-size:24px;line-height:24px;color:#f9fafb;font-weight:700;white-space:nowrap;">Jupiter</div><div style="position:absolute;left:99px;top:299.54px;font-size:25px;line-height:25px;color:#a3abbd;font-weight:400;white-space:nowrap;">Jupiter</div><svg style="position:absolute;left:0;top:0" width="400" height="1200"><g stroke="#22a04b" stroke-width="2.4" stroke-linecap="round"><path d="M23.5 395H43.5"/><path d="M28.3 386L38.7 404"/><path d="M38.7 386L28.3 404"/></g></svg><div style="position:absolute;left:65px;top:367px;width:24px;height:24px;border-radius:5px;background:linear-gradient(180deg,#c77ddf 0%,#a24fcb 55%,#8e3cb8 100%)"><svg width="24" height="24" viewBox="0 0 24 24" fill="none" stroke="#fbe8ff" stroke-width="1.8" stroke-linecap="round" stroke-linejoin="round"><circle cx="7.2" cy="8" r="2.4"/><path d="M7.2 5.6C11 4.3 16.5 5 19.6 8.8"/><circle cx="16.6" cy="15.6" r="2.4"/><path d="M16.6 18C13 19.3 7.8 18.8 4.6 15"/></svg></div><div style="position:absolute;left:65px;top:399px;width:24px;height:24px;border-radius:5px;background:linear-gradient(180deg,#c77ddf 0%,#a24fcb 55%,#8e3cb8 100%)"><svg width="24" height="24" viewBox="0 0 24 24" fill="none" stroke="#fbe8ff" stroke-width="1.8" stroke-linecap="round" stroke-linejoin="round"><circle cx="12" cy="14.5" r="4.5"/><path d="M6 5c1 3 3.5 5 6 5s5-2 6-5"/></svg></div><div style="position:absolute;left:99px;top:366.68px;font-size:24px;line-height:24px;color:#f9fafb;font-weight:700;white-space:nowrap;">Jupiter</div><div style="position:absolute;left:99px;top:397.54px;font-size:25px;line-height:25px;color:#a3abbd;font-weight:400;white-space:nowrap;">Saturn</div><svg style="position:absolute;left:0;top:0" width="400" height="1200"><rect x="22.0" y="481.5" width="23" height="23" rx="2.5" stroke="#d81b2e" stroke-width="3" fill="none"/></svg><div style="position:absolute;left:65px;top:465px;width:24px;height:24px;border-radius:5px;background:linear-gradient(180deg,#c77ddf 0%,#a24fcb 55%,#8e3cb8 100%)"><svg width="24" height="24" viewBox="0 0 24 24" fill="none" stroke="#fbe8ff" stroke-width="1.8" stroke-linecap="round" stroke-linejoin="round"><circle cx="7.2" cy="8" r="2.4"/><path d="M7.2 5.6C11 4.3 16.5 5 19.6 8.8"/><circle cx="16.6" cy="15.6" r="2.4"/><path d="M16.6 18C13 19.3 7.8 18.8 4.6 15"/></svg></div><div style="position:absolute;left:65px;top:497px;width:24px;height:24px;border-radius:5px;background:linear-gradient(180deg,#c77ddf 0%,#a24fcb 55%,#8e3cb8 100%)"><svg width="24" height="24" viewBox="0 0 24 24" fill="none" stroke="#fbe8ff" stroke-width="1.8" stroke-linecap="round" stroke-linejoin="round"><path d="M4.8 8.8C4.6 6.2 7.6 5.4 8.6 7.8L12 19L15.4 7.8C16.4 5.4 19.4 6.2 19.2 8.8"/></svg></div><div style="position:absolute;left:99px;top:464.68px;font-size:24px;line-height:24px;color:#f9fafb;font-weight:700;white-space:nowrap;">Jupiter</div><div style="position:absolute;left:99px;top:495.54px;font-size:25px;line-height:25px;color:#a3abbd;font-weight:400;white-space:nowrap;">South Node (T)</div><svg style="position:absolute;left:0;top:0" width="400" height="1200"><path d="M33.5 580.5L44.0 601H23.0Z" stroke="#22a04b" stroke-width="3" fill="none" stroke-linejoin="round"/></svg><div style="position:absolute;left:65px;top:563px;width:24px;height:24px;border-radius:5px;background:linear-gradient(180deg,#c77ddf 0%,#a24fcb 55%,#8e3cb8 100%)"><svg width="24" height="24" viewBox="0 0 24 24" fill="none" stroke="#fbe8ff" stroke-width="1.8" stroke-linecap="round" stroke-linejoin="round"><circle cx="7.2" cy="8" r="2.4"/><path d="M7.2 5.6C11 4.3 16.5 5 19.6 8.8"/><circle cx="16.6" cy="15.6" r="2.4"/><path d="M16.6 18C13 19.3 7.8 18.8 4.6 15"/></svg></div><div style="position:absolute;left:65px;top:595px;width:24px;height:24px;border-radius:5px;background:linear-gradient(180deg,#c77ddf 0%,#a24fcb 55%,#8e3cb8 100%)"><svg width="24" height="24" viewBox="0 0 24 24" fill="none" stroke="#fbe8ff" stroke-width="1.8" stroke-linecap="round" stroke-linejoin="round"><path d="M5 6.5V18M5 8.5C5 5.8 9 5.8 9 8.5V18M9 8.5C9 5.8 13 5.8 13 8.5V16.5C13 19.5 15.5 20 18.5 18.5"/></svg></div><div style="position:absolute;left:99px;top:562.68px;font-size:24px;line-height:24px;color:#f9fafb;font-weight:700;white-space:nowrap;">Jupiter</div><div style="position:absolute;left:99px;top:593.54px;font-size:25px;line-height:25px;color:#a3abbd;font-weight:400;white-space:nowrap;">Mercury</div><svg style="position:absolute;left:0;top:0" width="400" height="1200"><rect x="22.0" y="677.5" width="23" height="23" rx="2.5" stroke="#d81b2e" stroke-width="3" fill="none"/></svg><div style="position:absolute;left:65px;top:661px;width:24px;height:24px;border-radius:5px;background:linear-gradient(180deg,#c77ddf 0%,#a24fcb 55%,#8e3cb8 100%)"><svg width="24" height="24" viewBox="0 0 24 24" fill="none" stroke="#fbe8ff" stroke-width="1.8" stroke-linecap="round" stroke-linejoin="round"><circle cx="7.2" cy="8" r="2.4"/><path d="M7.2 5.6C11 4.3 16.5 5 19.6 8.8"/><circle cx="16.6" cy="15.6" r="2.4"/><path d="M16.6 18C13 19.3 7.8 18.8 4.6 15"/></svg></div><div style="position:absolute;left:65px;top:693px;width:24px;height:24px;border-radius:5px;background:linear-gradient(180deg,#c77ddf 0%,#a24fcb 55%,#8e3cb8 100%)"><svg width="24" height="24" viewBox="0 0 24 24" fill="none" stroke="#fbe8ff" stroke-width="1.8" stroke-linecap="round" stroke-linejoin="round"><path d="M5 19h14M5 15.5h4.5a4.5 4.5 0 1 1 5 0H19"/></svg></div><div style="position:absolute;left:99px;top:660.68px;font-size:24px;line-height:24px;color:#f9fafb;font-weight:700;white-space:nowrap;">Jupiter</div><div style="position:absolute;left:99px;top:691.54px;font-size:25px;line-height:25px;color:#a3abbd;font-weight:400;white-space:nowrap;">North Node (T)</div><svg style="position:absolute;left:0;top:0" width="400" height="1200"><g stroke="#d81b2e" stroke-width="2.6" fill="none"><circle cx="28.2" cy="792.5" r="5"/><circle cx="39.1" cy="781.4" r="5"/><path d="M31.7 789L35.6 784.9"/></g></svg><div style="position:absolute;left:65px;top:759px;width:24px;height:24px;border-radius:5px;background:linear-gradient(180deg,#c77ddf 0%,#a24fcb 55%,#8e3cb8 100%)"><svg width="24" height="24" viewBox="0 0 24 24" fill="none" stroke="#fbe8ff" stroke-width="1.8" stroke-linecap="round" stroke-linejoin="round"><circle cx="7.2" cy="8" r="2.4"/><path d="M7.2 5.6C11 4.3 16.5 5 19.6 8.8"/><circle cx="16.6" cy="15.6" r="2.4"/><path d="M16.6 18C13 19.3 7.8 18.8 4.6 15"/></svg></div><div style="position:absolute;left:65px;top:791px;width:24px;height:24px;border-radius:5px;background:linear-gradient(180deg,#c77ddf 0%,#a24fcb 55%,#8e3cb8 100%)"><svg width="24" height="24" viewBox="0 0 24 24" fill="none" stroke="#fbe8ff" stroke-width="1.8" stroke-linecap="round" stroke-linejoin="round"><path d="M4.5 11l2.5-3 2.5 3 2.5-3 2.5 3 2.5-3 2.5 3M4.5 17l2.5-3 2.5 3 2.5-3 2.5 3 2.5-3 2.5 3"/></svg></div><div style="position:absolute;left:99px;top:758.68px;font-size:24px;line-height:24px;color:#f9fafb;font-weight:700;white-space:nowrap;">Jupiter</div><div style="position:absolute;left:99px;top:789.54px;font-size:25px;line-height:25px;color:#a3abbd;font-weight:400;white-space:nowrap;">Moon</div><svg style="position:absolute;left:0;top:0" width="400" height="1200"><g stroke="#22a04b" stroke-width="2.4" stroke-linecap="round"><path d="M23.5 885H43.5"/><path d="M28.3 876L38.7 894"/><path d="M38.7 876L28.3 894"/></g></svg><div style="position:absolute;left:65px;top:857px;width:24px;height:24px;border-radius:5px;background:linear-gradient(180deg,#c77ddf 0%,#a24fcb 55%,#8e3cb8 100%)"><svg width="24" height="24" viewBox="0 0 24 24" fill="none" stroke="#fbe8ff" stroke-width="1.8" stroke-linecap="round" stroke-linejoin="round"><circle cx="7.2" cy="8" r="2.4"/><path d="M7.2 5.6C11 4.3 16.5 5 19.6 8.8"/><circle cx="16.6" cy="15.6" r="2.4"/><path d="M16.6 18C13 19.3 7.8 18.8 4.6 15"/></svg></div><div style="position:absolute;left:65px;top:889px;width:24px;height:24px;border-radius:5px;background:linear-gradient(180deg,#c77ddf 0%,#a24fcb 55%,#8e3cb8 100%)"><svg width="24" height="24" viewBox="0 0 24 24" fill="none" stroke="#fbe8ff" stroke-width="1.8" stroke-linecap="round" stroke-linejoin="round"><path d="M5 19h14M5 15.5h4.5a4.5 4.5 0 1 1 5 0H19"/></svg></div><div style="position:absolute;left:99px;top:856.68px;font-size:24px;line-height:24px;color:#f9fafb;font-weight:700;white-space:nowrap;">Jupiter</div><div style="position:absolute;left:99px;top:887.54px;font-size:25px;line-height:25px;color:#a3abbd;font-weight:400;white-space:nowrap;">Mars</div><svg style="position:absolute;left:0;top:0" width="400" height="1200"><rect x="22.0" y="971.5" width="23" height="23" rx="2.5" stroke="#d81b2e" stroke-width="3" fill="none"/></svg><div style="position:absolute;left:65px;top:955px;width:24px;height:24px;border-radius:5px;background:linear-gradient(180deg,#c77ddf 0%,#a24fcb 55%,#8e3cb8 100%)"><svg width="24" height="24" viewBox="0 0 24 24" fill="none" stroke="#fbe8ff" stroke-width="1.8" stroke-linecap="round" stroke-linejoin="round"><circle cx="8" cy="10.5" r="3"/><path d="M10.6 9C11 5.5 13 4 15.2 4C17.6 4 18.6 6 17.8 8.8C16.8 12 15 14 15.5 17C16 19.6 18.6 19.6 20 18"/></svg></div><div style="position:absolute;left:65px;top:987px;width:24px;height:24px;border-radius:5px;background:linear-gradient(180deg,#c77ddf 0%,#a24fcb 55%,#8e3cb8 100%)"><svg width="24" height="24" viewBox="0 0 24 24" fill="none" stroke="#fbe8ff" stroke-width="1.8" stroke-linecap="round" stroke-linejoin="round"><path d="M5 6.5V18M5 8.5C5 5.8 9 5.8 9 8.5V18M9 8.5C9 5.8 13 5.8 13 8.5V16.5C13 19.5 15.5 20 18.5 18.5"/></svg></div><div style="position:absolute;left:99px;top:954.68px;font-size:24px;line-height:24px;color:#f9fafb;font-weight:700;white-space:nowrap;">Jupiter</div><div style="position:absolute;left:99px;top:985.54px;font-size:25px;line-height:25px;color:#a3abbd;font-weight:400;white-space:nowrap;">Mercury</div><svg style="position:absolute;left:0;top:0" width="400" height="1200"><path d="M33.5 1070.5L44.0 1091H23.0Z" stroke="#22a04b" stroke-width="3" fill="none" stroke-linejoin="round"/></svg><div style="position:absolute;left:65px;top:1053px;width:24px;height:24px;border-radius:5px;background:linear-gradient(180deg,#c77ddf 0%,#a24fcb 55%,#8e3cb8 100%)"><svg width="24" height="24" viewBox="0 0 24 24" fill="none" stroke="#fbe8ff" stroke-width="1.8" stroke-linecap="round" stroke-linejoin="round"><circle cx="8" cy="10.5" r="3"/><path d="M10.6 9C11 5.5 13 4 15.2 4C17.6 4 18.6 6 17.8 8.8C16.8 12 15 14 15.5 17C16 19.6 18.6 19.6 20 18"/></svg></div><div style="position:absolute;left:65px;top:1085px;width:24px;height:24px;border-radius:5px;background:linear-gradient(180deg,#c77ddf 0%,#a24fcb 55%,#8e3cb8 100%)"><svg width="24" height="24" viewBox="0 0 24 24" fill="none" stroke="#fbe8ff" stroke-width="1.8" stroke-linecap="round" stroke-linejoin="round"><path d="M4.8 8.8C4.6 6.2 7.6 5.4 8.6 7.8L12 19L15.4 7.8C16.4 5.4 19.4 6.2 19.2 8.8"/></svg></div><div style="position:absolute;left:99px;top:1052.68px;font-size:24px;line-height:24px;color:#f9fafb;font-weight:700;white-space:nowrap;">Jupiter</div><div style="position:absolute;left:99px;top:1083.54px;font-size:25px;line-height:25px;color:#a3abbd;font-weight:400;white-space:nowrap;">South Node (T)</div><div style="position:absolute;left:0px;top:1128px;width:2686px;height:34px;box-sizing:border-box;background:#2d2d2f;border-top:2px solid #383b44"></div><div style="position:absolute;left:118px;top:1138px;width:195px;height:16px;box-sizing:border-box;background:#7b7b7b;border-radius:8px"></div></div><div style="position:absolute;left:144px;top:344px;width:2688px;height:1162px;box-sizing:border-box;border:2px solid #1f2937;border-radius:12px"></div>
</body></html>
